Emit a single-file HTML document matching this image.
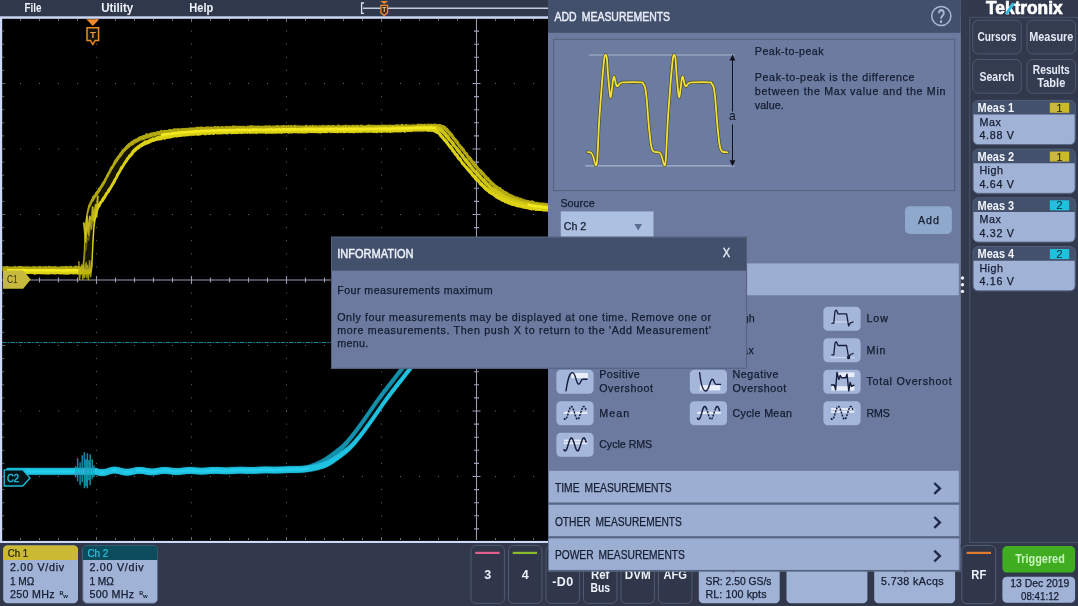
<!DOCTYPE html>
<html lang="en"><head><meta charset="utf-8"><title>Oscilloscope - Add Measurements</title>
<style>html,body{margin:0;padding:0;background:#32384b;overflow:hidden}svg{display:block;will-change:transform}text{font-family:'Liberation Sans', sans-serif;white-space:pre}</style>
</head><body>
<svg width="1078" height="606" viewBox="0 0 1078 606">
<g id="screen">
<rect x="0.00" y="0.00" width="1078.00" height="606.00" fill="#32384b"/>
<rect x="0.00" y="0.00" width="1078.00" height="16.50" fill="#30394c"/>
<g id="graticule">
<rect x="0.00" y="16.30" width="961.00" height="526.70" fill="#cdd7f6"/>
<rect x="2.20" y="18.80" width="958.00" height="522.10" fill="#000"/>
<path d="M96.5 30.60V540M191.5 30.60V540M286.5 30.60V540M381.5 30.60V540M571.5 30.60V540M666.5 30.60V540M761.5 30.60V540M856.5 30.60V540" stroke="#666a70" stroke-width="1" stroke-dasharray="1 12.10" fill="none"/>
<path d="M20.00 83.5H960M20.00 149.0H960M20.00 214.5H960M20.00 345.5H960M20.00 411.0H960M20.00 476.5H960" stroke="#666a70" stroke-width="1" stroke-dasharray="1 18.00" fill="none"/>
<path d="M20.5 19v2M20.5 540v-2M39.5 19v2M39.5 540v-2M58.5 19v2M58.5 540v-2M77.5 19v2M77.5 540v-2M96.5 19v3M96.5 540v-3M115.5 19v2M115.5 540v-2M134.5 19v2M134.5 540v-2M153.5 19v2M153.5 540v-2M172.5 19v2M172.5 540v-2M191.5 19v3M191.5 540v-3M210.5 19v2M210.5 540v-2M229.5 19v2M229.5 540v-2M248.5 19v2M248.5 540v-2M267.5 19v2M267.5 540v-2M286.5 19v3M286.5 540v-3M305.5 19v2M305.5 540v-2M324.5 19v2M324.5 540v-2M343.5 19v2M343.5 540v-2M362.5 19v2M362.5 540v-2M381.5 19v3M381.5 540v-3M400.5 19v2M400.5 540v-2M419.5 19v2M419.5 540v-2M438.5 19v2M438.5 540v-2M457.5 19v2M457.5 540v-2M476.5 19v3M476.5 540v-3M495.5 19v2M495.5 540v-2M514.5 19v2M514.5 540v-2M533.5 19v2M533.5 540v-2M552.5 19v2M552.5 540v-2M571.5 19v3M571.5 540v-3M590.5 19v2M590.5 540v-2M609.5 19v2M609.5 540v-2M628.5 19v2M628.5 540v-2M647.5 19v2M647.5 540v-2M666.5 19v3M666.5 540v-3M685.5 19v2M685.5 540v-2M704.5 19v2M704.5 540v-2M723.5 19v2M723.5 540v-2M742.5 19v2M742.5 540v-2M761.5 19v3M761.5 540v-3M780.5 19v2M780.5 540v-2M799.5 19v2M799.5 540v-2M818.5 19v2M818.5 540v-2M837.5 19v2M837.5 540v-2M856.5 19v3M856.5 540v-3M875.5 19v2M875.5 540v-2M894.5 19v2M894.5 540v-2M913.5 19v2M913.5 540v-2M932.5 19v2M932.5 540v-2M2.2 31.1h2M2.2 44.2h2M2.2 57.3h2M2.2 70.4h2M2.2 83.5h3M2.2 96.6h2M2.2 109.7h2M2.2 122.8h2M2.2 135.9h2M2.2 149.0h3M2.2 162.1h2M2.2 175.2h2M2.2 188.3h2M2.2 201.4h2M2.2 214.5h3M2.2 227.6h2M2.2 240.7h2M2.2 253.8h2M2.2 266.9h2M2.2 280.0h3M2.2 293.1h2M2.2 306.2h2M2.2 319.3h2M2.2 332.4h2M2.2 345.5h3M2.2 358.6h2M2.2 371.7h2M2.2 384.8h2M2.2 397.9h2M2.2 411.0h3M2.2 424.1h2M2.2 437.2h2M2.2 450.3h2M2.2 463.4h2M2.2 476.5h3M2.2 489.6h2M2.2 502.7h2M2.2 515.8h2M2.2 528.9h2" stroke="#6f6f78" stroke-width="1" fill="none"/>
<path d="M476.5 19V540M2 280.0H960M474.0 31.1h5.0M474.0 44.2h5.0M474.0 57.3h5.0M474.0 70.4h5.0M472.5 83.5h8M474.0 96.6h5.0M474.0 109.7h5.0M474.0 122.8h5.0M474.0 135.9h5.0M472.5 149.0h8M474.0 162.1h5.0M474.0 175.2h5.0M474.0 188.3h5.0M474.0 201.4h5.0M472.5 214.5h8M474.0 227.6h5.0M474.0 240.7h5.0M474.0 253.8h5.0M474.0 266.9h5.0M472.5 280.0h8M474.0 293.1h5.0M474.0 306.2h5.0M474.0 319.3h5.0M474.0 332.4h5.0M472.5 345.5h8M474.0 358.6h5.0M474.0 371.7h5.0M474.0 384.8h5.0M474.0 397.9h5.0M472.5 411.0h8M474.0 424.1h5.0M474.0 437.2h5.0M474.0 450.3h5.0M474.0 463.4h5.0M472.5 476.5h8M474.0 489.6h5.0M474.0 502.7h5.0M474.0 515.8h5.0M474.0 528.9h5.0M20.5 277.5v5.0M39.5 277.5v5.0M58.5 277.5v5.0M77.5 277.5v5.0M96.5 276.0v8M115.5 277.5v5.0M134.5 277.5v5.0M153.5 277.5v5.0M172.5 277.5v5.0M191.5 276.0v8M210.5 277.5v5.0M229.5 277.5v5.0M248.5 277.5v5.0M267.5 277.5v5.0M286.5 276.0v8M305.5 277.5v5.0M324.5 277.5v5.0M343.5 277.5v5.0M362.5 277.5v5.0M381.5 276.0v8M400.5 277.5v5.0M419.5 277.5v5.0M438.5 277.5v5.0M457.5 277.5v5.0M476.5 276.0v8M495.5 277.5v5.0M514.5 277.5v5.0M533.5 277.5v5.0M552.5 277.5v5.0M571.5 276.0v8M590.5 277.5v5.0M609.5 277.5v5.0M628.5 277.5v5.0M647.5 277.5v5.0M666.5 276.0v8M685.5 277.5v5.0M704.5 277.5v5.0M723.5 277.5v5.0M742.5 277.5v5.0M761.5 276.0v8M780.5 277.5v5.0M799.5 277.5v5.0M818.5 277.5v5.0M837.5 277.5v5.0M856.5 276.0v8M875.5 277.5v5.0M894.5 277.5v5.0M913.5 277.5v5.0M932.5 277.5v5.0" stroke="#9a9cb4" stroke-width="1.1" fill="none"/>
<path d="M2 342.5H960" stroke="#1f86a1" stroke-width="1.1" stroke-dasharray="4.6 1 1.6 1" fill="none"/>
</g>
<g id="ch1-wave" stroke-linejoin="round">
<path d="M7.0 270.3L8.0 270.3L9.0 270.3L10.0 270.3L11.0 270.3L12.0 270.3L13.0 270.3L14.0 270.3L15.0 270.3L16.0 270.3L17.0 270.3L18.0 270.3L19.0 270.3L20.0 270.3L21.0 270.3L22.0 270.3L23.0 270.3L24.0 270.3L25.0 270.3L26.0 270.3L27.0 270.3L28.0 270.3L29.0 270.3L30.0 270.3L31.0 270.3L32.0 270.3L33.0 270.3L34.0 270.3L35.0 270.3L36.0 270.3L37.0 270.3L38.0 270.3L39.0 270.3L40.0 270.3L41.0 270.3L42.0 270.3L43.0 270.3L44.0 270.3L45.0 270.3L46.0 270.3L47.0 270.3L48.0 270.3L49.0 270.3L50.0 270.3L51.0 270.3L52.0 270.3L53.0 270.3L54.0 270.3L55.0 270.3L56.0 270.3L57.0 270.3L58.0 270.3L59.0 270.3L60.0 270.3L61.0 270.3L62.0 270.3L63.0 270.3L64.0 270.3L65.0 270.3L66.0 270.3L67.0 270.3L68.0 270.3L69.0 270.3L70.0 270.3L71.0 270.3L72.0 270.3L73.0 270.3L74.0 270.3L75.0 270.3L76.0 270.3L77.0 270.3L78.0 270.3L79.0 270.3L80.0 270.3L81.0 270.3L82.0 270.3L83.0 270.3L84.0 270.3L85.0 270.3L86.0 270.3L87.0 268.5L88.0 260.3L89.0 239.6L90.0 224.0L91.0 216.7L92.0 212.0L93.0 208.6L94.0 206.1L95.0 204.0L96.0 202.2L97.0 200.5L98.0 199.1L99.0 197.6L100.0 196.2L101.0 194.7L102.0 193.2L103.0 191.7L104.0 190.2L105.0 188.7L106.0 187.1L107.0 185.5L108.0 183.8L109.0 182.0L110.0 180.2L111.0 178.3L112.0 176.4L113.0 174.5L114.0 172.6L115.0 170.8L116.0 169.1L117.0 167.4L118.0 165.7L119.0 164.1L120.0 162.5L121.0 161.0L122.0 159.6L123.0 158.2L124.0 156.8L125.0 155.5L126.0 154.2L127.0 152.9L128.0 151.7L129.0 150.6L130.0 149.5L131.0 148.5L132.0 147.6L133.0 146.8L134.0 146.0L135.0 145.3L136.0 144.6L137.0 143.9L138.0 143.3L139.0 142.7L140.0 142.2L141.0 141.6L142.0 141.2L143.0 140.7L144.0 140.3L145.0 139.8L146.0 139.4L147.0 139.0L148.0 138.7L149.0 138.3L150.0 138.0L151.0 137.6L152.0 137.3L153.0 137.1L154.0 136.8L155.0 136.5L156.0 136.3L157.0 136.1L158.0 135.9L159.0 135.6L160.0 135.4L161.0 135.2L162.0 135.0L163.0 134.8L164.0 134.7L165.0 134.5L166.0 134.3L167.0 134.2L168.0 134.0L169.0 133.9L170.0 133.8L171.0 133.6L172.0 133.5L173.0 133.4L174.0 133.3L175.0 133.1L176.0 133.0L177.0 132.9L178.0 132.8L179.0 132.7L180.0 132.6L181.0 132.5L182.0 132.4L183.0 132.3L184.0 132.2L185.0 132.1L186.0 132.0L187.0 131.9L188.0 131.9L189.0 131.8L190.0 131.7L191.0 131.6L192.0 131.6L193.0 131.5L194.0 131.5L195.0 131.4L196.0 131.3L197.0 131.3L198.0 131.2L199.0 131.2L200.0 131.1L201.0 131.1L202.0 131.0L203.0 131.0L204.0 130.9L205.0 130.9L206.0 130.8L207.0 130.8L208.0 130.7L209.0 130.7L210.0 130.6L211.0 130.6L212.0 130.5L213.0 130.5L214.0 130.5L215.0 130.4L216.0 130.4L217.0 130.3L218.0 130.3L219.0 130.3L220.0 130.2L221.0 130.2L222.0 130.2L223.0 130.2L224.0 130.1L225.0 130.1L226.0 130.1L227.0 130.1L228.0 130.0L229.0 130.0L230.0 130.0L231.0 130.0L232.0 130.0L233.0 130.0L234.0 129.9L235.0 129.9L236.0 129.9L237.0 129.9L238.0 129.9L239.0 129.9L240.0 129.8L241.0 129.8L242.0 129.8L243.0 129.8L244.0 129.8L245.0 129.8L246.0 129.8L247.0 129.8L248.0 129.7L249.0 129.7L250.0 129.7L251.0 129.7L252.0 129.7L253.0 129.7L254.0 129.7L255.0 129.7L256.0 129.7L257.0 129.7L258.0 129.6L259.0 129.6L260.0 129.6L261.0 129.6L262.0 129.6L263.0 129.6L264.0 129.6L265.0 129.6L266.0 129.6L267.0 129.6L268.0 129.6L269.0 129.5L270.0 129.5L271.0 129.5L272.0 129.5L273.0 129.5L274.0 129.5L275.0 129.5L276.0 129.5L277.0 129.5L278.0 129.5L279.0 129.5L280.0 129.5L281.0 129.5L282.0 129.4L283.0 129.4L284.0 129.4L285.0 129.4L286.0 129.4L287.0 129.4L288.0 129.4L289.0 129.4L290.0 129.4L291.0 129.4L292.0 129.4L293.0 129.4L294.0 129.4L295.0 129.3L296.0 129.3L297.0 129.3L298.0 129.3L299.0 129.3L300.0 129.3L301.0 129.3L302.0 129.3L303.0 129.3L304.0 129.3L305.0 129.3L306.0 129.2L307.0 129.2L308.0 129.2L309.0 129.2L310.0 129.2L311.0 129.2L312.0 129.2L313.0 129.2L314.0 129.2L315.0 129.2L316.0 129.2L317.0 129.2L318.0 129.2L319.0 129.2L320.0 129.2L321.0 129.1L322.0 129.1L323.0 129.1L324.0 129.1L325.0 129.1L326.0 129.1L327.0 129.1L328.0 129.1L329.0 129.1L330.0 129.1L331.0 129.1L332.0 129.1L333.0 129.1L334.0 129.1L335.0 129.1L336.0 129.1L337.0 129.1L338.0 129.0L339.0 129.0L340.0 129.0L341.0 129.0L342.0 129.0L343.0 129.0L344.0 129.0L345.0 129.0L346.0 129.0L347.0 129.0L348.0 129.0L349.0 129.0L350.0 129.0L351.0 129.0L352.0 129.0L353.0 129.0L354.0 129.0L355.0 128.9L356.0 128.9L357.0 128.9L358.0 128.9L359.0 128.9L360.0 128.9L361.0 128.9L362.0 128.9L363.0 128.9L364.0 128.9L365.0 128.9L366.0 128.9L367.0 128.9L368.0 128.9L369.0 128.8L370.0 128.8L371.0 128.8L372.0 128.8L373.0 128.8L374.0 128.8L375.0 128.8L376.0 128.8L377.0 128.8L378.0 128.8L379.0 128.8L380.0 128.7L381.0 128.7L382.0 128.7L383.0 128.7L384.0 128.7L385.0 128.7L386.0 128.7L387.0 128.7L388.0 128.7L389.0 128.6L390.0 128.6L391.0 128.6L392.0 128.6L393.0 128.6L394.0 128.6L395.0 128.6L396.0 128.6L397.0 128.5L398.0 128.5L399.0 128.5L400.0 128.5L401.0 128.5L402.0 128.5L403.0 128.4L404.0 128.4L405.0 128.4L406.0 128.3L407.0 128.3L408.0 128.2L409.0 128.2L410.0 128.1L411.0 128.1L412.0 128.0L413.0 128.0L414.0 127.9L415.0 127.9L416.0 127.8L417.0 127.8L418.0 127.8L419.0 127.7L420.0 127.7L421.0 127.7L422.0 127.6L423.0 127.6L424.0 127.6L425.0 127.6L426.0 127.6L427.0 127.6L428.0 127.6L429.0 127.6L430.0 127.6L431.0 127.7L432.0 127.7L433.0 127.7L434.0 127.8L435.0 127.8L436.0 127.9L437.0 128.1L438.0 128.5L439.0 128.9L440.0 129.3L441.0 129.9L442.0 130.7L443.0 131.8L444.0 132.9L445.0 134.1L446.0 135.2L447.0 136.3L448.0 137.5L449.0 138.7L450.0 139.9L451.0 141.2L452.0 142.5L453.0 143.8L454.0 145.1L455.0 146.4L456.0 147.7L457.0 149.0L458.0 150.3L459.0 151.6L460.0 152.9L461.0 154.2L462.0 155.5L463.0 156.8L464.0 158.1L465.0 159.4L466.0 160.7L467.0 162.0L468.0 163.2L469.0 164.4L470.0 165.6L471.0 166.8L472.0 168.0L473.0 169.1L474.0 170.3L475.0 171.4L476.0 172.5L477.0 173.6L478.0 174.6L479.0 175.7L480.0 176.8L481.0 177.9L482.0 179.0L483.0 180.0L484.0 181.1L485.0 182.2L486.0 183.2L487.0 184.2L488.0 185.2L489.0 186.1L490.0 187.0L491.0 187.9L492.0 188.7L493.0 189.5L494.0 190.2L495.0 190.9L496.0 191.6L497.0 192.3L498.0 193.0L499.0 193.6L500.0 194.2L501.0 194.8L502.0 195.4L503.0 196.0L504.0 196.5L505.0 197.0L506.0 197.5L507.0 198.0L508.0 198.5L509.0 199.0L510.0 199.5L511.0 199.9L512.0 200.3L513.0 200.7L514.0 201.1L515.0 201.4L516.0 201.8L517.0 202.1L518.0 202.4L519.0 202.6L520.0 202.9L521.0 203.2L522.0 203.4L523.0 203.7L524.0 203.9L525.0 204.1L526.0 204.4L527.0 204.6L528.0 204.8L529.0 204.9L530.0 205.1L531.0 205.3L532.0 205.5L533.0 205.6L534.0 205.8L535.0 206.0L536.0 206.1L537.0 206.3L538.0 206.4L539.0 206.6L540.0 206.7L541.0 206.8L542.0 206.9L543.0 207.1L544.0 207.2L545.0 207.3L546.0 207.4L547.0 207.4L548.0 207.5L549.0 207.6L550.0 207.7L551.0 207.7L552.0 207.8" fill="none" stroke="#4a4608" stroke-width="9.5" opacity="0.3"/>
<path d="M3.0 266.9L4.0 267.2L5.0 266.9L6.0 266.9L7.0 266.7L8.0 266.9L9.0 267.3L10.0 267.1L11.0 267.3L12.0 267.1L13.0 267.1L14.0 267.1L15.0 266.5L16.0 267.3L17.0 267.2L18.0 267.1L19.0 266.5L20.0 266.5L21.0 266.7L22.0 266.9L23.0 267.1L24.0 267.0L25.0 267.2L26.0 266.8L27.0 267.1L28.0 267.1L29.0 266.8L30.0 267.5L31.0 267.2L32.0 267.4L33.0 266.8L34.0 266.8L35.0 266.9L36.0 267.0L37.0 267.2L38.0 267.1L39.0 266.9L40.0 266.7L41.0 266.8L42.0 267.4L43.0 266.8L44.0 267.1L45.0 267.1L46.0 266.6L47.0 267.0L48.0 267.4L49.0 266.4L50.0 266.9L51.0 267.0L52.0 266.8L53.0 267.1L54.0 267.0L55.0 266.6L56.0 267.2L57.0 267.2L58.0 267.3L59.0 267.4L60.0 267.1L61.0 267.0L62.0 266.6L63.0 267.2L64.0 266.8L65.0 266.9L66.0 266.6L67.0 266.7L68.0 266.8L69.0 267.4L70.0 266.4L71.0 266.6L72.0 267.1L73.0 267.4L74.0 267.2L75.0 266.4L76.0 266.2L77.0 267.1L78.0 266.8L79.0 266.7L80.0 267.3L81.0 267.3L82.0 267.0L83.0 265.3L84.0 257.1L85.0 236.7L86.0 220.9L87.0 213.6L88.0 208.9L89.0 204.9L90.0 203.2L91.0 201.0L92.0 199.0L93.0 196.6L94.0 195.6L95.0 194.6L96.0 192.4L97.0 191.3L98.0 190.2L99.0 188.0L100.0 187.4L101.0 185.5L102.0 183.8L103.0 182.3L104.0 180.7L105.0 178.8L106.0 177.2L107.0 174.8L108.0 173.0L109.0 171.5L110.0 169.3L111.0 167.3L112.0 166.1L113.0 164.5L114.0 162.3L115.0 160.4L116.0 159.2L117.0 157.7L118.0 156.2L119.0 155.3L120.0 153.2L121.0 152.6L122.0 150.5L123.0 149.4L124.0 148.6L125.0 147.6L126.0 146.4L127.0 145.3L128.0 144.3L129.0 143.5L130.0 142.9L131.0 141.9L132.0 141.3L133.0 140.8L134.0 140.0L135.0 139.6L136.0 139.0L137.0 138.9L138.0 138.0L139.0 137.3L140.0 136.8L141.0 136.5L142.0 136.4L143.0 135.6L144.0 135.5L145.0 135.6L146.0 133.9L147.0 134.0L148.0 134.1L149.0 133.9L150.0 133.6L151.0 133.1L152.0 133.2L153.0 132.9L154.0 132.4L155.0 133.1L156.0 132.2L157.0 131.8L158.0 131.7L159.0 131.5L160.0 131.4L161.0 130.4L162.0 130.9L163.0 131.2L164.0 130.4L165.0 130.6L166.0 130.7L167.0 130.6L168.0 130.6L169.0 129.6L170.0 129.8L171.0 129.7L172.0 129.9L173.0 129.9L174.0 128.7L175.0 129.7L176.0 128.8L177.0 129.4L178.0 128.6L179.0 129.0L180.0 129.2L181.0 128.8L182.0 128.8L183.0 128.9L184.0 128.6L185.0 128.5L186.0 128.9L187.0 128.7L188.0 128.2L189.0 129.0L190.0 127.8L191.0 128.4L192.0 128.0L193.0 128.0L194.0 128.1L195.0 127.9L196.0 128.0L197.0 127.3L198.0 127.3L199.0 127.8L200.0 127.3L201.0 127.3L202.0 127.1L203.0 127.8L204.0 127.6L205.0 127.8L206.0 127.0L207.0 127.3L208.0 126.9L209.0 127.4L210.0 127.6L211.0 126.9L212.0 127.6L213.0 127.3L214.0 127.0L215.0 126.4L216.0 127.4L217.0 126.9L218.0 126.7L219.0 127.0L220.0 127.0L221.0 127.3L222.0 126.5L223.0 127.1L224.0 127.2L225.0 127.2L226.0 126.6L227.0 126.5L228.0 127.0L229.0 126.7L230.0 126.7L231.0 127.0L232.0 126.5L233.0 125.9L234.0 126.5L235.0 126.0L236.0 126.8L237.1 126.6L238.1 126.3L239.2 126.5L240.3 126.7L241.3 126.5L242.4 126.9L243.5 126.4L244.5 126.8L245.6 126.9L246.7 126.9L247.7 126.2L248.8 126.7L249.9 125.8L250.9 126.1L252.0 125.8L253.1 126.7L254.1 126.0L255.2 126.3L256.3 126.3L257.3 126.3L258.4 126.1L259.5 126.4L260.5 126.8L261.6 126.3L262.7 126.4L263.7 126.6L264.8 126.2L265.9 125.9L266.9 126.1L268.0 126.6L269.1 125.7L270.1 126.0L271.2 126.5L272.3 126.4L273.3 126.2L274.4 126.4L275.5 126.2L276.5 125.8L277.6 125.7L278.7 126.0L279.7 126.4L280.8 126.0L281.9 125.9L282.9 125.9L284.0 125.7L285.1 126.1L286.1 125.8L287.2 126.2L288.3 125.4L289.3 126.2L290.4 125.9L291.5 125.5L292.5 126.3L293.6 126.0L294.7 125.4L295.7 125.8L296.8 126.1L297.9 125.9L298.9 126.2L300.0 126.2L301.1 126.2L302.1 126.1L303.2 126.4L304.3 126.2L305.3 126.1L306.4 125.3L307.5 126.2L308.5 126.3L309.6 125.8L310.7 125.8L311.7 126.5L312.8 125.4L313.9 126.0L314.9 126.6L316.0 125.6L317.1 126.1L318.1 126.4L319.2 125.8L320.3 126.0L321.3 126.1L322.4 125.6L323.5 125.8L324.5 125.9L325.6 126.1L326.7 125.8L327.7 125.8L328.8 125.5L329.9 125.7L330.9 126.1L332.0 125.8L333.1 125.5L334.1 125.5L335.2 126.6L336.3 126.1L337.3 126.0L338.4 125.0L339.5 125.9L340.5 125.9L341.6 126.2L342.7 125.9L343.7 125.7L344.8 125.9L345.9 125.1L346.9 126.0L348.0 125.8L349.1 125.5L350.1 126.1L351.2 126.2L352.3 125.3L353.3 125.5L354.4 125.8L355.5 125.7L356.5 125.5L357.6 125.4L358.7 126.3L359.7 125.9L360.8 125.3L361.9 125.2L362.9 126.1L364.0 125.9L365.0 126.2L366.0 125.8L367.0 125.3L368.0 125.7L369.0 124.9L370.0 125.3L371.0 125.5L372.0 125.7L373.0 125.3L374.0 125.5L375.0 125.7L376.0 125.6L377.0 125.7L378.0 125.6L379.0 125.4L380.0 125.7L381.0 125.5L382.0 125.2L383.0 125.3L384.0 125.4L385.0 125.4L386.0 125.5L387.0 125.4L388.0 125.5L389.0 125.4L390.0 125.0L391.0 125.5L392.0 125.7L393.0 125.5L394.0 125.3L395.0 125.5L396.0 125.0L397.0 124.7L398.0 125.3L399.0 125.0L400.0 125.5L401.0 124.9L402.0 124.4L403.0 124.9L404.0 125.7L405.0 125.1L406.0 124.7L407.0 124.9L408.0 125.3L409.0 125.2L410.0 125.1L411.0 125.4L412.0 125.1L413.0 124.9L414.0 125.0L415.0 125.3L416.0 125.0L417.0 125.0L418.0 124.3L419.0 124.5L420.0 124.8L421.0 124.4L422.0 124.8L423.0 124.6L424.0 124.7L425.0 124.3L426.0 125.1L427.0 124.7L428.0 124.2L429.0 124.3L430.0 125.1L431.0 124.2L432.0 124.6L433.0 124.6L434.0 124.4L435.0 124.0L436.0 124.5L437.0 124.5L438.0 124.8L439.0 124.7L440.0 124.6L441.0 125.1L442.0 125.3L443.0 125.6L444.0 126.0L445.0 126.5L446.0 127.7L447.0 128.2L448.0 129.4L449.0 130.8L450.0 131.5L451.0 132.9L452.0 133.6L453.0 135.2L454.0 136.8L455.0 138.1L456.0 139.2L457.0 140.4L458.0 141.4L459.0 143.7L460.0 144.6L461.0 146.0L462.0 146.7L463.0 148.2L464.0 149.0L465.0 151.1L466.0 152.5L467.0 152.9L468.0 154.8L469.0 156.3L470.0 156.9L471.0 158.1L472.0 159.6L473.0 160.9L474.0 161.9L475.0 163.5L476.0 164.8L477.0 166.0L478.0 167.2L479.0 168.5L480.0 169.5L481.0 169.9L482.0 171.2L483.0 172.1L484.0 173.2L485.0 174.6L486.0 175.7L487.0 176.9L488.0 177.3L489.0 178.5L490.0 179.9L491.0 180.8L492.0 181.8L493.0 182.8L494.0 183.5L495.0 184.8L496.0 185.5L497.0 186.1L498.0 186.7L499.0 187.6L500.0 187.5L501.0 188.7L502.0 189.7L503.0 189.9L504.0 191.0L505.0 191.6L506.0 191.7L507.0 192.6L508.0 193.1L509.0 193.9L510.0 194.4L511.0 194.7L512.0 195.0L513.0 195.7L514.0 196.1L515.0 196.8L516.0 197.1L517.0 197.2L518.0 197.4L519.0 198.0L520.0 198.2L521.0 198.4L522.0 199.0L523.0 199.2L524.0 199.7L525.0 200.0L526.0 200.0L527.0 201.1L528.0 200.5L529.0 201.2L530.0 201.1L531.0 201.6L532.0 200.7L533.0 201.4L534.0 201.9L535.0 202.2L536.0 202.9L537.0 202.4L538.0 202.9L539.0 202.9L540.0 203.1L541.0 203.1L542.0 203.1L543.0 203.4L544.0 203.1L545.0 203.9L546.0 203.3L547.0 203.8L548.0 204.5L549.0 203.9L550.0 204.1L551.0 204.5L552.0 204.2L553.0 204.0L554.0 204.4L555.0 204.6L556.0 204.7L556.0 207.8L555.0 208.0L554.0 207.7L553.0 207.6L552.0 207.4L551.0 207.5L550.0 207.7L549.0 207.5L548.0 207.5L547.0 207.2L546.0 207.1L545.0 207.0L544.0 206.4L543.0 206.9L542.0 206.6L541.0 206.5L540.0 205.8L539.0 205.7L538.0 205.7L537.0 205.6L536.0 205.6L535.0 205.4L534.0 205.3L533.0 204.9L532.0 204.9L531.0 204.8L530.0 204.3L529.0 204.7L528.0 204.2L527.0 204.1L526.0 203.4L525.0 203.1L524.0 202.9L523.0 202.7L522.0 202.6L521.0 202.2L520.0 201.8L519.0 201.3L518.0 201.1L517.0 201.1L516.0 200.2L515.0 200.1L514.0 199.7L513.0 198.7L512.0 198.6L511.0 198.5L510.0 197.2L509.0 197.0L508.0 196.6L507.0 195.9L506.0 195.6L505.0 194.9L504.0 194.0L503.0 193.9L502.0 193.2L501.0 192.7L500.0 192.1L499.0 191.1L498.0 190.3L497.0 189.3L496.0 188.9L495.0 187.8L494.0 187.0L493.0 185.9L492.0 185.0L491.0 184.2L490.0 183.6L489.0 181.8L488.0 180.9L487.0 180.2L486.0 179.4L485.0 178.1L484.0 176.5L483.0 175.2L482.0 174.8L481.0 173.5L480.0 172.3L479.0 171.7L478.0 170.6L477.0 169.3L476.0 168.1L475.0 167.0L474.0 166.1L473.0 164.7L472.0 163.4L471.0 162.2L470.0 160.4L469.0 159.8L468.0 158.4L467.0 157.0L466.0 155.1L465.0 154.1L464.0 153.2L463.0 151.2L462.0 150.3L461.0 149.4L460.0 147.5L459.0 146.9L458.0 145.3L457.0 143.8L456.0 142.7L455.0 141.4L454.0 140.1L453.0 139.1L452.0 137.4L451.0 136.3L450.0 135.6L449.0 134.2L448.0 132.8L447.0 132.1L446.0 131.2L445.0 129.9L444.0 129.1L443.0 128.9L442.0 128.5L441.0 128.2L440.0 128.3L439.0 127.7L438.0 128.2L437.0 127.5L436.0 127.6L435.0 127.9L434.0 128.0L433.0 127.9L432.0 127.8L431.0 127.7L430.0 127.7L429.0 127.8L428.0 127.7L427.0 127.8L426.0 127.9L425.0 127.8L424.0 128.0L423.0 128.0L422.0 128.3L421.0 128.0L420.0 127.8L419.0 127.9L418.0 128.0L417.0 128.3L416.0 128.0L415.0 128.3L414.0 128.7L413.0 127.7L412.0 128.1L411.0 128.4L410.0 128.5L409.0 128.5L408.0 128.4L407.0 128.7L406.0 128.6L405.0 128.5L404.0 129.2L403.0 128.7L402.0 128.5L401.0 128.6L400.0 128.6L399.0 128.7L398.0 128.0L397.0 128.6L396.0 129.0L395.0 128.4L394.0 128.7L393.0 129.0L392.0 129.0L391.0 129.1L390.0 128.4L389.0 128.7L388.0 128.7L387.0 129.0L386.0 129.1L385.0 128.2L384.0 129.1L383.0 128.5L382.0 129.0L381.0 128.5L380.0 128.9L379.0 129.2L378.0 128.9L377.0 129.0L376.0 129.1L375.0 129.0L374.0 128.9L373.0 129.3L372.0 129.2L371.0 128.9L370.0 129.6L369.0 128.7L368.0 129.2L367.0 128.9L366.0 129.0L365.0 129.2L364.0 129.1L362.9 129.2L361.9 128.7L360.8 128.7L359.7 129.2L358.7 128.8L357.6 128.8L356.5 128.7L355.5 129.4L354.4 129.2L353.3 129.4L352.3 128.9L351.2 129.1L350.1 128.8L349.1 129.3L348.0 129.5L346.9 128.9L345.9 129.5L344.8 129.4L343.7 129.1L342.7 128.7L341.6 129.5L340.5 129.1L339.5 129.0L338.4 129.3L337.3 129.3L336.3 129.5L335.2 128.9L334.1 129.5L333.1 129.5L332.0 129.5L330.9 129.2L329.9 129.0L328.8 129.5L327.7 129.2L326.7 129.2L325.6 129.6L324.5 129.2L323.5 128.7L322.4 129.2L321.3 128.8L320.3 129.5L319.2 129.3L318.1 129.1L317.1 129.3L316.0 129.5L314.9 129.3L313.9 129.6L312.8 129.3L311.7 129.6L310.7 129.7L309.6 129.7L308.5 129.2L307.5 129.6L306.4 128.9L305.3 129.1L304.3 128.9L303.2 129.6L302.1 129.1L301.1 129.4L300.0 129.4L298.9 129.4L297.9 129.3L296.8 129.5L295.7 129.9L294.7 129.5L293.6 129.6L292.5 129.7L291.5 129.4L290.4 129.2L289.3 129.4L288.3 129.7L287.2 129.1L286.1 129.4L285.1 129.8L284.0 129.7L282.9 129.5L281.9 129.7L280.8 129.6L279.7 129.3L278.7 129.2L277.6 129.4L276.5 129.8L275.5 129.4L274.4 129.4L273.3 129.4L272.3 129.2L271.2 129.6L270.1 129.3L269.1 129.7L268.0 129.1L266.9 129.7L265.9 129.5L264.8 129.2L263.7 129.8L262.7 129.6L261.6 129.2L260.5 129.5L259.5 129.8L258.4 129.6L257.3 129.9L256.3 129.9L255.2 129.9L254.1 129.8L253.1 130.1L252.0 129.9L250.9 129.9L249.9 129.3L248.8 130.0L247.7 130.1L246.7 129.8L245.6 129.7L244.5 130.3L243.5 129.4L242.4 130.0L241.3 130.5L240.3 129.7L239.2 130.1L238.1 130.4L237.1 129.9L236.0 130.1L235.0 130.2L234.0 129.8L233.0 130.0L232.0 130.1L231.0 130.2L230.0 130.0L229.0 130.0L228.0 129.8L227.0 130.0L226.0 130.3L225.0 130.1L224.0 129.9L223.0 130.0L222.0 130.8L221.0 130.5L220.0 130.4L219.0 129.6L218.0 130.4L217.0 130.4L216.0 130.8L215.0 130.5L214.0 130.4L213.0 130.6L212.0 130.0L211.0 130.8L210.0 130.6L209.0 130.4L208.0 131.0L207.0 131.1L206.0 130.4L205.0 130.6L204.0 130.9L203.0 130.9L202.0 130.8L201.0 130.7L200.0 131.5L199.0 131.3L198.0 130.8L197.0 130.8L196.0 131.6L195.0 131.5L194.0 131.8L193.0 131.6L192.0 131.2L191.0 131.6L190.0 131.0L189.0 131.4L188.0 131.7L187.0 131.9L186.0 131.6L185.0 131.8L184.0 132.1L183.0 132.1L182.0 132.3L181.0 132.2L180.0 132.2L179.0 132.6L178.0 132.5L177.0 132.4L176.0 132.5L175.0 132.8L174.0 132.9L173.0 133.0L172.0 133.1L171.0 133.3L170.0 133.3L169.0 133.2L168.0 133.7L167.0 134.0L166.0 134.0L165.0 133.9L164.0 134.2L163.0 134.1L162.0 134.0L161.0 134.6L160.0 134.5L159.0 135.1L158.0 134.9L157.0 134.7L156.0 135.3L155.0 136.1L154.0 135.9L153.0 135.8L152.0 136.2L151.0 136.8L150.0 137.0L149.0 137.2L148.0 137.8L147.0 137.9L146.0 138.1L145.0 138.5L144.0 139.2L143.0 139.4L142.0 139.8L141.0 139.7L140.0 140.3L139.0 141.0L138.0 141.2L137.0 142.0L136.0 142.4L135.0 143.0L134.0 143.3L133.0 144.6L132.0 145.0L131.0 145.3L130.0 146.1L129.0 147.5L128.0 147.6L127.0 148.8L126.0 149.8L125.0 150.7L124.0 151.5L123.0 153.1L122.0 154.4L121.0 155.9L120.0 157.1L119.0 158.3L118.0 159.9L117.0 161.3L116.0 162.7L115.0 164.2L114.0 165.8L113.0 167.7L112.0 168.9L111.0 170.8L110.0 172.7L109.0 174.3L108.0 176.4L107.0 177.9L106.0 180.1L105.0 182.3L104.0 184.0L103.0 185.6L102.0 187.2L101.0 188.4L100.0 190.7L99.0 191.9L98.0 193.5L97.0 194.6L96.0 196.3L95.0 197.3L94.0 199.3L93.0 200.9L92.0 201.8L91.0 204.1L90.0 206.3L89.0 208.3L88.0 211.7L87.0 216.6L86.0 223.9L85.0 239.3L84.0 260.4L83.0 268.7L82.0 270.6L81.0 270.6L80.0 270.8L79.0 270.7L78.0 270.1L77.0 270.3L76.0 270.1L75.0 270.1L74.0 270.4L73.0 270.4L72.0 270.5L71.0 270.0L70.0 270.1L69.0 270.4L68.0 270.4L67.0 270.3L66.0 270.4L65.0 270.2L64.0 270.6L63.0 270.5L62.0 270.4L61.0 270.2L60.0 270.4L59.0 269.7L58.0 270.2L57.0 270.4L56.0 270.0L55.0 270.4L54.0 270.4L53.0 270.1L52.0 270.3L51.0 270.3L50.0 270.5L49.0 270.5L48.0 270.4L47.0 270.2L46.0 270.4L45.0 270.4L44.0 270.6L43.0 270.5L42.0 270.2L41.0 270.1L40.0 270.3L39.0 270.2L38.0 270.1L37.0 270.4L36.0 270.3L35.0 270.4L34.0 270.5L33.0 270.3L32.0 271.0L31.0 270.3L30.0 270.7L29.0 270.4L28.0 270.7L27.0 269.8L26.0 270.2L25.0 270.5L24.0 270.5L23.0 271.0L22.0 270.5L21.0 270.7L20.0 270.6L19.0 270.6L18.0 270.5L17.0 270.4L16.0 270.5L15.0 270.1L14.0 270.7L13.0 270.2L12.0 270.5L11.0 270.9L10.0 270.3L9.0 270.4L8.0 270.7L7.0 270.4L6.0 270.2L5.0 270.5L4.0 270.5L3.0 270.6Z" fill="#b3a912" stroke="#b3a912" stroke-width="1.2"/>
<path d="M301.0 127.8L302.0 127.7L303.0 128.0L304.0 127.8L305.0 127.7L306.0 126.9L307.0 127.8L308.0 127.9L309.0 127.4L310.0 127.4L311.0 128.1L312.0 127.0L313.0 127.6L314.0 128.2L315.0 127.2L316.0 127.7L317.0 128.0L318.0 127.4L319.0 127.6L320.0 127.7L321.0 127.2L322.0 127.4L323.0 127.5L324.0 127.7L325.0 127.4L326.0 127.4L327.0 127.1L328.0 127.3L329.0 127.7L330.0 127.4L331.0 127.1L332.0 127.1L333.0 128.2L334.0 127.7L335.0 127.6L336.0 126.6L337.0 127.5L338.0 127.5L339.0 127.8L340.0 127.5L341.0 127.3L342.0 127.5L343.0 126.7L344.0 127.6L345.0 127.4L346.0 127.1L347.0 127.7L348.0 127.8L349.0 126.9L350.0 127.1L351.0 127.4L352.0 127.3L353.0 127.1L354.0 127.0L355.0 127.9L356.0 127.5L357.0 126.9L358.0 126.8L359.0 127.7L360.0 127.5L361.0 127.8L362.0 127.4L363.0 126.9L364.0 127.3L365.0 126.5L366.0 126.9L367.0 127.1L368.0 127.3L369.0 126.9L370.0 127.1L371.0 127.3L372.0 127.2L373.0 127.3L374.0 127.2L375.0 127.0L376.0 127.3L377.0 127.1L378.0 126.8L379.0 126.9L380.0 127.0L381.0 127.0L382.0 127.1L383.0 127.0L384.0 127.1L385.0 127.0L386.0 126.6L387.0 127.1L388.0 127.3L389.0 127.1L390.0 126.9L391.0 127.1L392.0 126.6L393.0 126.3L394.0 126.9L395.0 126.6L396.0 127.1L397.0 126.5L398.0 126.0L399.0 126.5L400.0 127.3L401.0 126.7L402.0 126.3L403.0 126.5L404.0 126.9L405.0 126.8L406.0 126.7L407.0 127.0L408.0 126.7L409.0 126.5L410.0 126.6L411.0 126.9L412.0 126.6L413.0 126.6L414.0 125.9L415.0 126.1L416.0 126.4L417.0 126.0L418.0 126.4L419.0 126.2L420.0 126.3L421.0 125.9L422.0 126.7L423.0 126.3L424.0 125.8L425.0 125.9L426.0 126.7L427.0 125.8L428.0 126.2L429.0 126.2L430.0 126.0L431.0 125.6L432.0 126.1L433.0 126.1L434.0 126.4L435.0 126.3L436.0 126.2L437.0 126.7L438.0 126.9L439.0 127.2L440.0 127.6L441.0 128.1L442.0 129.3L443.0 129.8L444.0 131.0L445.0 132.4L446.0 133.1L447.0 134.5L448.0 135.2L449.0 136.8L450.0 138.4L451.0 139.7L452.0 140.8L453.0 142.0L454.0 143.0L455.0 145.3L456.0 146.2L457.0 147.6L458.0 148.3L459.0 149.8L460.0 150.6L461.0 152.7L462.0 154.1L463.0 154.5L464.0 156.4L465.0 157.9L466.0 158.5L467.0 159.7L468.0 161.2L469.0 162.5L470.0 163.5L471.0 165.1L472.0 166.4L473.0 167.6L474.0 168.8L475.0 170.1L476.0 171.1L477.0 171.5L478.0 172.8L479.0 173.7L480.0 174.8L481.0 176.2L482.0 177.3L483.0 178.5L484.0 178.9L485.0 180.1L486.0 181.5L487.0 182.4L488.0 183.4L489.0 184.4L490.0 185.1L491.0 186.4L492.0 187.1L493.0 187.7L494.0 188.3L495.0 189.2L496.0 189.1L497.0 190.3L498.0 191.3L499.0 191.5L500.0 192.6L501.0 193.2L502.0 193.3L503.0 194.2L504.0 194.7L505.0 195.5L506.0 196.0L507.0 196.3L508.0 196.6L509.0 197.3L510.0 197.7L511.0 198.4L512.0 198.7L513.0 198.8L514.0 199.0L515.0 199.6L516.0 199.8L517.0 200.0L518.0 200.6L519.0 200.8L520.0 201.3L521.0 201.6L522.0 201.6L523.0 202.7L524.0 202.1L525.0 202.8L526.0 202.7L527.0 203.2L528.0 202.3L529.0 203.0L530.0 203.5L531.0 203.8L532.0 204.5L533.0 204.0L534.0 204.5L535.0 204.5L536.0 204.7L537.0 204.7L538.0 204.7L539.0 205.0L540.0 204.7L541.0 205.5L542.0 204.9L543.0 205.4L544.0 206.1L545.0 205.5L546.0 205.7L547.0 206.1L548.0 205.8L549.0 205.6L550.0 206.0L551.0 206.2L552.0 206.3L552.0 209.7L551.0 209.5L550.0 209.7L549.0 209.4L548.0 209.3L547.0 208.6L546.0 209.3L545.0 209.3L544.0 208.8L543.0 208.6L542.0 209.1L541.0 208.1L540.0 208.5L539.0 208.8L538.0 207.9L537.0 208.1L536.0 208.3L535.0 207.6L534.0 207.6L533.0 207.6L532.0 207.0L531.0 207.0L530.0 206.9L529.0 206.8L528.0 206.5L527.0 206.2L526.0 205.8L525.0 205.8L524.0 205.8L523.0 205.4L522.0 204.9L521.0 204.7L520.0 205.3L519.0 204.6L518.0 204.2L517.0 203.1L516.0 203.6L515.0 203.3L514.0 203.2L513.0 202.5L512.0 202.0L511.0 201.7L510.0 200.7L509.0 200.9L508.0 200.3L507.0 199.6L506.0 199.6L505.0 199.2L504.0 197.9L503.0 197.5L502.0 197.2L501.0 196.6L500.0 195.8L499.0 195.1L498.0 195.2L497.0 194.3L496.0 193.1L495.0 192.3L494.0 192.3L493.0 191.4L492.0 190.8L491.0 189.8L490.0 188.5L489.0 187.9L488.0 186.3L487.0 185.7L486.0 184.9L485.0 184.0L484.0 182.6L483.0 181.7L482.0 180.8L481.0 179.7L480.0 178.7L479.0 177.5L478.0 176.3L477.0 175.5L476.0 174.2L475.0 172.9L474.0 171.8L473.0 170.8L472.0 169.7L471.0 168.6L470.0 167.3L469.0 166.2L468.0 164.9L467.0 163.4L466.0 162.5L465.0 161.4L464.0 159.9L463.0 158.4L462.0 157.3L461.0 155.6L460.0 154.1L459.0 153.3L458.0 151.8L457.0 150.9L456.0 149.2L455.0 147.5L454.0 146.5L453.0 145.9L452.0 144.1L451.0 142.6L450.0 141.4L449.0 140.5L448.0 139.3L447.0 138.1L446.0 137.3L445.0 135.9L444.0 134.6L443.0 133.6L442.0 132.8L441.0 131.8L440.0 131.2L439.0 130.3L438.0 130.1L437.0 130.0L436.0 129.5L435.0 129.8L434.0 129.6L433.0 129.6L432.0 129.3L431.0 130.0L430.0 129.6L429.0 129.3L428.0 129.3L427.0 129.9L426.0 129.2L425.0 129.5L424.0 129.5L423.0 129.3L422.0 129.1L421.0 129.4L420.0 129.5L419.0 129.7L418.0 129.6L417.0 129.5L416.0 129.7L415.0 129.7L414.0 129.7L413.0 129.7L412.0 129.7L411.0 129.9L410.0 129.6L409.0 129.7L408.0 129.9L407.0 129.6L406.0 129.9L405.0 129.6L404.0 129.9L403.0 130.3L402.0 130.3L401.0 130.2L400.0 130.1L399.0 129.9L398.0 130.7L397.0 130.4L396.0 130.5L395.0 130.1L394.0 130.2L393.0 129.9L392.0 130.5L391.0 130.5L390.0 129.9L389.0 130.3L388.0 130.5L387.0 129.9L386.0 129.9L385.0 130.1L384.0 130.3L383.0 130.1L382.0 130.4L381.0 130.5L380.0 130.6L379.0 130.6L378.0 130.8L377.0 130.8L376.0 130.2L375.0 130.4L374.0 130.2L373.0 130.3L372.0 130.5L371.0 130.5L370.0 130.7L369.0 130.2L368.0 130.3L367.0 130.6L366.0 130.5L365.0 130.5L364.0 130.6L363.0 130.4L362.0 130.8L361.0 130.7L360.0 130.6L359.0 130.5L358.0 130.6L357.0 130.0L356.0 130.4L355.0 130.7L354.0 130.3L353.0 130.7L352.0 130.7L351.0 130.3L350.0 130.6L349.0 130.6L348.0 130.8L347.0 130.8L346.0 130.7L345.0 130.5L344.0 130.7L343.0 130.7L342.0 130.9L341.0 130.8L340.0 130.6L339.0 130.4L338.0 130.7L337.0 130.6L336.0 130.5L335.0 130.7L334.0 130.6L333.0 130.8L332.0 130.9L331.0 130.7L330.0 131.3L329.0 130.7L328.0 131.1L327.0 130.8L326.0 131.1L325.0 130.2L324.0 130.6L323.0 130.9L322.0 131.0L321.0 131.4L320.0 130.9L319.0 131.2L318.0 131.0L317.0 131.1L316.0 131.0L315.0 130.8L314.0 131.0L313.0 130.6L312.0 131.2L311.0 130.7L310.0 131.0L309.0 131.4L308.0 130.9L307.0 130.9L306.0 131.2L305.0 131.0L304.0 130.8L303.0 131.0L302.0 131.1L301.0 131.2Z" fill="#cfc514" stroke="#cfc514" stroke-width="1.2"/>
<path d="M11.0 270.3L12.0 270.0L13.0 270.3L14.0 270.3L15.0 270.5L16.0 270.3L17.0 269.9L18.0 270.1L19.0 269.9L20.0 270.1L21.0 270.1L22.0 270.1L23.0 270.7L24.0 269.9L25.0 270.0L26.0 270.1L27.0 270.7L28.0 270.7L29.0 270.5L30.0 270.3L31.0 270.1L32.0 270.2L33.0 270.0L34.0 270.4L35.0 270.1L36.0 270.1L37.0 270.4L38.0 269.7L39.0 270.0L40.0 269.8L41.0 270.4L42.0 270.4L43.0 270.3L44.0 270.2L45.0 270.0L46.0 270.1L47.0 270.3L48.0 270.5L49.0 270.4L50.0 269.8L51.0 270.4L52.0 270.1L53.0 270.1L54.0 270.6L55.0 270.2L56.0 269.8L57.0 270.8L58.0 270.3L59.0 270.2L60.0 270.4L61.0 270.1L62.0 270.2L63.0 270.6L64.0 270.0L65.0 270.0L66.0 269.9L67.0 269.8L68.0 270.1L69.0 270.2L70.0 270.6L71.0 270.0L72.0 270.4L73.0 270.3L74.0 270.6L75.0 270.5L76.0 270.4L77.0 269.8L78.0 270.8L79.0 270.6L80.0 270.1L81.0 269.8L82.0 270.0L83.0 270.8L84.0 271.0L85.0 270.1L86.0 270.4L87.0 270.5L88.0 269.9L89.0 269.9L90.0 270.2L91.0 268.4L92.0 260.1L93.0 239.0L94.0 223.7L95.0 216.5L96.0 211.7L97.0 209.0L98.0 205.6L99.0 203.6L100.0 201.9L101.0 201.0L102.0 199.1L103.0 197.3L104.0 196.6L105.0 194.6L106.0 192.8L107.0 192.0L108.0 189.6L109.0 188.4L110.0 187.1L111.0 185.3L112.0 183.5L113.0 181.9L114.0 179.7L115.0 178.4L116.0 176.4L117.0 174.1L118.0 172.5L119.0 171.0L120.0 168.7L121.0 166.9L122.0 165.8L123.0 164.4L124.0 162.5L125.0 161.0L126.0 159.6L127.0 157.7L128.0 157.1L129.0 155.0L130.0 154.5L131.0 153.1L132.0 151.4L133.0 150.1L134.0 149.1L135.0 148.3L136.0 147.5L137.0 146.6L138.0 145.7L139.0 145.2L140.0 144.4L141.0 143.6L142.0 143.2L143.0 142.4L144.0 141.9L145.0 140.9L146.0 141.0L147.0 140.7L148.0 140.3L149.0 139.7L150.0 139.0L151.0 139.0L152.0 138.4L153.0 137.7L154.0 138.6L155.0 137.9L156.0 137.2L157.0 136.8L158.0 136.6L159.0 136.6L160.0 136.0L161.0 135.9L162.0 135.9L163.0 134.8L164.0 135.2L165.0 135.3L166.0 135.0L167.0 134.8L168.0 134.6L169.0 135.2L170.0 134.4L171.0 133.8L172.0 134.3L173.0 133.8L174.0 133.4L175.0 133.3L176.0 133.0L177.0 133.8L178.0 133.3L179.0 133.1L180.0 132.7L181.0 132.5L182.0 133.5L183.0 132.3L184.0 132.9L185.0 132.2L186.0 132.7L187.0 132.1L188.0 131.7L189.0 132.0L190.0 131.9L191.0 131.6L192.0 131.7L193.0 131.7L194.0 131.1L195.0 131.2L196.0 131.6L197.0 130.6L198.0 131.7L199.0 131.0L200.0 131.3L201.0 131.1L202.0 130.9L203.0 131.0L204.0 130.8L205.0 131.4L206.0 131.4L207.0 130.7L208.0 131.1L209.0 131.1L210.0 131.2L211.0 130.3L212.0 130.4L213.0 130.1L214.0 130.8L215.0 130.5L216.0 130.8L217.0 130.2L218.0 129.9L219.0 130.6L220.0 129.8L221.0 130.0L222.0 130.3L223.0 130.8L224.0 129.7L225.0 130.1L226.0 130.3L227.0 129.9L228.0 129.9L229.0 129.6L230.0 130.3L231.0 129.6L232.0 129.5L233.0 129.5L234.0 130.0L235.0 130.1L236.0 129.6L237.0 129.8L238.0 129.8L239.0 129.4L240.0 129.9L241.0 130.5L242.0 129.9L243.0 130.3L244.0 129.5L244.9 129.6L245.9 129.9L246.8 129.7L247.7 129.4L248.7 129.7L249.6 129.3L250.5 129.7L251.5 129.3L252.4 129.2L253.3 129.1L254.3 129.8L255.2 129.3L256.1 130.2L257.1 129.9L258.0 130.2L258.9 129.2L259.9 129.9L260.8 129.5L261.7 129.6L262.7 129.5L263.6 129.7L264.5 129.4L265.5 129.0L266.4 129.5L267.3 129.3L268.3 129.2L269.2 129.5L270.1 129.8L271.1 129.6L272.0 129.1L272.9 129.9L273.9 129.6L274.8 129.1L275.7 129.2L276.7 129.4L277.6 129.1L278.5 129.3L279.5 129.7L280.4 129.8L281.3 129.6L282.3 129.1L283.2 129.5L284.1 129.6L285.1 129.6L286.0 129.8L286.9 129.3L287.9 129.7L288.8 129.2L289.7 130.0L290.7 129.2L291.6 129.5L292.5 129.9L293.5 129.0L294.4 129.3L295.3 129.9L296.3 129.5L297.2 129.1L298.1 129.4L299.1 129.0L300.0 129.0L300.9 129.0L301.9 129.1L302.8 128.8L303.7 129.0L304.7 129.0L305.6 129.8L306.5 128.9L307.5 128.7L308.4 129.2L309.3 129.3L310.3 128.5L311.2 129.6L312.1 129.0L313.1 128.4L314.0 129.4L314.9 128.9L315.9 128.5L316.8 129.1L317.7 128.9L318.7 128.8L319.6 129.3L320.5 129.1L321.5 128.9L322.4 128.8L323.3 129.0L324.3 129.1L325.2 129.3L326.1 129.1L327.1 128.7L328.0 129.0L328.9 129.2L329.9 129.2L330.8 128.2L331.7 128.6L332.7 128.8L333.6 129.7L334.5 128.8L335.5 128.8L336.4 128.4L337.3 128.8L338.3 128.9L339.2 128.8L340.1 129.5L341.1 128.6L342.0 128.8L342.9 129.1L343.9 128.5L344.8 128.3L345.7 129.3L346.7 129.1L347.6 128.8L348.5 128.8L349.5 129.0L350.4 129.1L351.3 128.2L352.3 128.5L353.2 129.2L354.1 129.2L355.1 128.3L356.0 128.5L357.0 128.3L358.0 128.6L359.0 129.1L360.0 128.7L361.0 129.4L362.0 129.0L363.0 128.8L364.0 128.6L365.0 129.0L366.0 128.8L367.0 128.6L368.0 128.6L369.0 128.5L370.0 128.6L371.0 128.8L372.0 128.4L373.0 128.7L374.0 128.9L375.0 128.8L376.0 128.6L377.0 128.7L378.0 128.6L379.0 128.6L380.0 128.6L381.0 128.6L382.0 129.0L383.0 128.4L384.0 128.2L385.0 128.4L386.0 128.6L387.0 128.4L388.0 128.8L389.0 129.1L390.0 128.5L391.0 128.8L392.0 128.2L393.0 128.8L394.0 129.2L395.0 128.7L396.0 127.9L397.0 128.5L398.0 128.8L399.0 128.6L400.0 128.1L401.0 128.1L402.0 128.2L403.0 127.7L404.0 127.9L405.0 128.1L406.0 127.9L407.0 127.5L408.0 127.6L409.0 127.6L410.0 128.2L411.0 127.8L412.0 127.5L413.0 127.8L414.0 127.3L415.0 127.4L416.0 127.3L417.0 127.6L418.0 126.8L419.0 127.1L420.0 127.6L421.0 127.5L422.0 126.7L423.0 127.6L424.0 127.3L425.0 127.2L426.0 127.5L427.0 127.9L428.0 127.5L429.0 127.5L430.0 127.3L431.0 127.5L432.0 127.8L433.0 127.8L434.0 128.2L435.0 128.7L436.0 129.2L437.0 129.9L438.0 130.4L439.0 132.0L440.0 133.0L441.0 134.0L442.0 135.5L443.0 136.3L444.0 138.0L445.0 138.8L446.0 139.7L447.0 140.9L448.0 142.4L449.0 143.8L450.0 145.4L451.0 145.8L452.0 147.5L453.0 148.6L454.0 150.4L455.0 151.5L456.0 153.3L457.0 153.8L458.0 155.1L459.0 157.3L460.0 158.0L461.0 159.1L462.0 161.1L463.0 162.4L464.0 163.4L465.0 164.5L466.0 166.0L467.0 166.7L468.0 167.8L469.0 168.8L470.0 170.0L471.0 170.8L472.0 172.0L473.0 173.9L474.0 174.7L475.0 175.9L476.0 177.0L477.0 177.8L478.0 178.9L479.0 179.8L480.0 181.5L481.0 182.4L482.0 183.1L483.0 184.1L484.0 185.1L485.0 186.0L486.0 187.1L487.0 187.6L488.0 188.5L489.0 189.4L490.0 190.3L491.0 190.9L492.0 192.4L493.0 192.5L494.0 192.9L495.0 194.0L496.0 194.1L497.0 194.7L498.0 195.7L499.0 195.9L500.0 196.5L501.0 196.8L502.0 197.3L503.0 197.9L504.0 198.7L505.0 198.9L506.0 199.4L507.0 199.6L508.0 200.1L509.0 200.8L510.0 201.4L511.0 201.4L512.0 201.9L513.0 202.3L514.0 202.3L515.0 202.7L516.0 202.8L517.0 202.9L518.0 203.5L519.0 202.9L520.0 203.9L521.0 203.7L522.0 204.2L523.0 204.1L524.0 205.4L525.0 205.1L526.0 205.0L527.0 205.0L528.0 204.7L529.0 205.4L530.0 205.3L531.0 205.6L532.0 205.7L533.0 206.0L534.0 206.4L535.0 206.3L536.0 206.9L537.0 206.4L538.0 207.2L539.0 206.9L540.0 206.4L541.0 207.2L542.0 207.2L543.0 207.0L544.0 207.4L545.0 207.7L546.0 207.5L547.0 207.5L548.0 207.5L548.0 211.2L547.0 210.9L546.0 211.0L545.0 211.0L544.0 211.0L543.0 210.8L542.0 210.4L541.0 210.5L540.0 210.2L539.0 210.3L538.0 210.2L537.0 210.1L536.0 210.4L535.0 209.7L534.0 209.6L533.0 209.5L532.0 209.8L531.0 209.7L530.0 209.3L529.0 209.1L528.0 208.7L527.0 208.6L526.0 208.3L525.0 208.4L524.0 208.0L523.0 207.8L522.0 207.8L521.0 207.0L520.0 207.1L519.0 206.7L518.0 206.9L517.0 206.7L516.0 206.3L515.0 206.0L514.0 205.5L513.0 205.3L512.0 205.2L511.0 205.0L510.0 204.5L509.0 203.7L508.0 203.8L507.0 203.1L506.0 202.7L505.0 202.7L504.0 201.8L503.0 201.0L502.0 201.3L501.0 200.4L500.0 199.8L499.0 199.5L498.0 198.6L497.0 198.1L496.0 197.9L495.0 196.7L494.0 196.1L493.0 195.4L492.0 194.6L491.0 194.2L490.0 193.5L489.0 193.1L488.0 191.8L487.0 191.3L486.0 190.4L485.0 189.7L484.0 188.7L483.0 187.6L482.0 186.2L481.0 185.9L480.0 184.8L479.0 183.3L478.0 181.9L477.0 181.1L476.0 180.6L475.0 179.6L474.0 177.9L473.0 177.0L472.0 176.1L471.0 174.5L470.0 173.3L469.0 172.4L468.0 171.2L467.0 170.0L466.0 168.6L465.0 167.6L464.0 166.4L463.0 165.1L462.0 164.4L461.0 162.4L460.0 161.2L459.0 160.0L458.0 159.3L457.0 157.6L456.0 156.0L455.0 155.3L454.0 153.6L453.0 152.1L452.0 151.3L451.0 149.3L450.0 148.3L449.0 147.1L448.0 145.7L447.0 144.3L446.0 143.2L445.0 141.7L444.0 140.9L443.0 139.7L442.0 138.2L441.0 137.4L440.0 136.4L439.0 134.8L438.0 133.7L437.0 133.3L436.0 132.9L435.0 132.2L434.0 131.8L433.0 131.5L432.0 130.9L431.0 131.3L430.0 130.8L429.0 131.3L428.0 131.2L427.0 130.8L426.0 130.7L425.0 130.7L424.0 130.8L423.0 130.9L422.0 130.9L421.0 130.8L420.0 130.9L419.0 130.8L418.0 130.8L417.0 131.0L416.0 130.8L415.0 130.9L414.0 130.6L413.0 131.0L412.0 131.2L411.0 131.3L410.0 131.2L409.0 131.1L408.0 131.4L407.0 131.3L406.0 131.0L405.0 132.1L404.0 131.8L403.0 131.5L402.0 131.5L401.0 131.6L400.0 131.8L399.0 131.6L398.0 131.7L397.0 131.9L396.0 131.2L395.0 131.7L394.0 132.0L393.0 131.9L392.0 131.9L391.0 131.9L390.0 132.5L389.0 132.0L388.0 131.7L387.0 132.2L386.0 132.0L385.0 131.7L384.0 131.8L383.0 131.6L382.0 132.4L381.0 132.1L380.0 132.1L379.0 131.9L378.0 131.8L377.0 132.7L376.0 131.8L375.0 132.4L374.0 131.9L373.0 132.4L372.0 132.0L371.0 131.8L370.0 132.1L369.0 132.1L368.0 131.9L367.0 132.1L366.0 132.2L365.0 131.8L364.0 131.9L363.0 132.2L362.0 131.5L361.0 132.5L360.0 132.0L359.0 132.3L358.0 132.2L357.0 132.0L356.0 132.2L355.1 132.1L354.1 132.6L353.2 132.6L352.3 132.1L351.3 132.5L350.4 132.5L349.5 132.6L348.5 132.0L347.6 132.1L346.7 131.9L345.7 132.5L344.8 132.3L343.9 132.6L342.9 132.1L342.0 131.9L341.1 132.5L340.1 131.9L339.2 132.1L338.3 132.4L337.3 132.8L336.4 132.0L335.5 132.4L334.5 132.5L333.6 132.3L332.7 132.3L331.7 132.0L330.8 132.6L329.9 132.1L328.9 132.0L328.0 132.0L327.1 132.4L326.1 132.6L325.2 132.2L324.3 132.4L323.3 132.4L322.4 132.1L321.5 132.5L320.5 133.0L319.6 132.5L318.7 132.9L317.7 132.3L316.8 132.4L315.9 132.6L314.9 132.5L314.0 132.3L313.1 132.5L312.1 132.2L311.2 132.5L310.3 132.3L309.3 132.2L308.4 132.1L307.5 132.7L306.5 132.3L305.6 133.0L304.7 132.8L303.7 133.0L302.8 132.3L301.9 132.9L300.9 132.6L300.0 132.6L299.1 132.6L298.1 132.8L297.2 132.6L296.3 132.2L295.3 132.6L294.4 132.5L293.5 132.4L292.5 132.7L291.6 133.0L290.7 132.8L289.7 132.4L288.8 133.1L287.9 132.9L286.9 132.5L286.0 132.5L285.1 132.7L284.1 132.5L283.2 132.7L282.3 133.0L281.3 133.1L280.4 132.9L279.5 132.6L278.5 132.9L277.6 133.0L276.7 133.0L275.7 133.2L274.8 132.8L273.9 133.1L272.9 132.7L272.0 133.4L271.1 132.8L270.1 133.0L269.2 133.3L268.3 132.7L267.3 132.9L266.4 133.4L265.5 133.1L264.5 132.8L263.6 133.0L262.7 132.7L261.7 132.8L260.8 132.8L259.9 132.9L258.9 132.6L258.0 132.8L257.1 132.9L256.1 133.5L255.2 132.8L254.3 132.7L253.3 133.1L252.4 133.1L251.5 132.6L250.5 133.5L249.6 133.0L248.7 132.5L247.7 133.3L246.8 132.9L245.9 132.7L244.9 133.2L244.0 133.0L243.0 132.9L242.0 133.4L241.0 133.2L240.0 133.1L239.0 133.0L238.0 133.2L237.0 133.3L236.0 133.5L235.0 133.4L234.0 133.1L233.0 133.3L232.0 133.5L231.0 133.6L230.0 132.7L229.0 133.1L228.0 133.3L227.0 134.1L226.0 133.3L225.0 133.4L224.0 133.1L223.0 133.5L222.0 133.6L221.0 133.5L220.0 134.1L219.0 133.5L218.0 133.7L217.0 134.0L216.0 133.5L215.0 133.4L214.0 134.3L213.0 134.1L212.0 133.9L211.0 134.0L210.0 134.2L209.0 134.4L208.0 133.7L207.0 134.0L206.0 134.6L205.0 134.7L204.0 134.0L203.0 134.2L202.0 134.1L201.0 134.4L200.0 134.9L199.0 134.6L198.0 135.3L197.0 135.0L196.0 134.9L195.0 134.8L194.0 135.2L193.0 135.1L192.0 135.0L191.0 135.1L190.0 135.2L189.0 135.3L188.0 135.6L187.0 135.4L186.0 135.7L185.0 136.0L184.0 136.0L183.0 136.0L182.0 136.1L181.0 136.2L180.0 136.3L179.0 136.4L178.0 136.6L177.0 137.0L176.0 136.7L175.0 136.7L174.0 137.0L173.0 137.2L172.0 137.2L171.0 137.7L170.0 138.1L169.0 137.8L168.0 138.2L167.0 138.0L166.0 138.6L165.0 139.2L164.0 139.0L163.0 138.6L162.0 139.2L161.0 139.7L160.0 139.8L159.0 139.7L158.0 140.0L157.0 140.3L156.0 140.3L155.0 140.8L154.0 141.3L153.0 141.5L152.0 141.6L151.0 142.1L150.0 142.5L149.0 143.4L148.0 143.6L147.0 143.8L146.0 144.5L145.0 144.7L144.0 145.3L143.0 145.8L142.0 146.6L141.0 146.6L140.0 147.6L139.0 148.6L138.0 149.3L137.0 149.5L136.0 151.0L135.0 151.6L134.0 152.6L133.0 153.9L132.0 155.3L131.0 156.2L130.0 157.4L129.0 158.5L128.0 160.0L127.0 161.5L126.0 162.7L125.0 164.2L124.0 165.8L123.0 167.4L122.0 169.1L121.0 170.5L120.0 172.6L119.0 174.3L118.0 175.9L117.0 178.2L116.0 179.8L115.0 182.1L114.0 183.6L113.0 185.2L112.0 187.0L111.0 188.8L110.0 190.5L109.0 192.3L108.0 193.0L107.0 194.8L106.0 196.2L105.0 198.2L104.0 199.6L103.0 201.4L102.0 202.2L101.0 203.6L100.0 205.9L99.0 207.3L98.0 209.2L97.0 212.4L96.0 215.7L95.0 220.3L94.0 227.5L93.0 243.2L92.0 263.6L91.0 271.8L90.0 273.4L89.0 273.4L88.0 273.2L87.0 273.3L86.0 273.9L85.0 273.7L84.0 273.9L83.0 273.9L82.0 273.6L81.0 273.6L80.0 273.5L79.0 274.0L78.0 273.9L77.0 273.6L76.0 273.6L75.0 273.7L74.0 273.6L73.0 273.8L72.0 273.4L71.0 273.5L70.0 273.6L69.0 273.8L68.0 273.6L67.0 274.3L66.0 273.8L65.0 273.6L64.0 274.0L63.0 273.6L62.0 273.6L61.0 273.9L60.0 273.7L59.0 273.7L58.0 273.5L57.0 273.5L56.0 273.6L55.0 273.8L54.0 273.6L53.0 273.6L52.0 273.4L51.0 273.5L50.0 273.8L49.0 273.9L48.0 273.7L47.0 273.8L46.0 273.9L45.0 273.6L44.0 273.7L43.0 273.6L42.0 273.5L41.0 273.7L40.0 273.0L39.0 273.7L38.0 273.3L37.0 273.6L36.0 273.3L35.0 274.2L34.0 273.8L33.0 273.5L32.0 273.5L31.0 273.0L30.0 273.5L29.0 273.3L28.0 273.4L27.0 273.4L26.0 273.5L25.0 273.6L24.0 273.5L23.0 273.9L22.0 273.3L21.0 273.8L20.0 273.5L19.0 273.1L18.0 273.7L17.0 273.6L16.0 273.3L15.0 273.6L14.0 273.8L13.0 273.5L12.0 273.5L11.0 273.4Z" fill="#ddd316" stroke="#ddd316" stroke-width="1.2"/>
<path d="M7.0 270.3L8.0 270.4L9.0 270.3L10.0 270.3L11.0 270.2L12.0 270.3L13.0 270.5L14.0 270.4L15.0 270.5L16.0 270.3L17.0 270.4L18.0 270.3L19.0 270.1L20.0 270.4L21.0 270.4L22.0 270.4L23.0 270.0L24.0 270.0L25.0 270.2L26.0 270.2L27.0 270.3L28.0 270.3L29.0 270.4L30.0 270.2L31.0 270.3L32.0 270.4L33.0 270.2L34.0 270.6L35.0 270.4L36.0 270.5L37.0 270.2L38.0 270.2L39.0 270.2L40.0 270.3L41.0 270.4L42.0 270.3L43.0 270.2L44.0 270.2L45.0 270.2L46.0 270.5L47.0 270.2L48.0 270.3L49.0 270.4L50.0 270.1L51.0 270.3L52.0 270.5L53.0 270.0L54.0 270.3L55.0 270.3L56.0 270.2L57.0 270.4L58.0 270.3L59.0 270.1L60.0 270.4L61.0 270.4L62.0 270.4L63.0 270.5L64.0 270.4L65.0 270.3L66.0 270.1L67.0 270.4L68.0 270.2L69.0 270.2L70.0 270.1L71.0 270.2L72.0 270.2L73.0 270.5L74.0 270.0L75.0 270.1L76.0 270.3L77.0 270.5L78.0 270.4L79.0 270.0L80.0 269.9L81.0 270.4L82.0 270.2L83.0 270.1L84.0 270.4L85.0 270.5M161.0 135.1L162.0 135.0L163.0 134.8L164.0 134.7L165.0 134.1L166.0 134.3L167.0 134.3L168.0 133.9L169.0 133.9L170.0 133.9L171.0 133.8L172.0 133.7L173.0 133.1L174.0 133.2L175.0 133.1L176.0 133.1L177.0 133.1L178.0 132.4L179.0 132.8L180.0 132.4L181.0 132.6L182.0 132.1L183.0 132.3L184.0 132.4L185.0 132.1L186.0 132.0L187.0 132.1L188.0 131.9L189.0 131.8L190.0 131.9L191.0 131.8L192.0 131.5L193.0 131.9L194.0 131.3L195.0 131.5L196.0 131.3L197.0 131.3L198.0 131.3L199.0 131.2L200.0 131.2L201.0 130.8L202.0 130.8L203.0 131.1L204.0 130.8L205.0 130.7L206.0 130.6L207.0 131.0L208.0 130.8L209.0 130.9L210.0 130.5L211.0 130.6L212.0 130.4L213.0 130.6L214.0 130.7L215.0 130.3L216.0 130.6L217.0 130.5L218.0 130.3L219.0 130.0L220.0 130.5L221.0 130.2L222.0 130.1L223.0 130.2L224.0 130.2L225.0 130.3L226.0 129.9L227.0 130.2L228.0 130.3L229.0 130.2L230.0 130.0L231.0 129.9L232.0 130.1L233.0 130.0L234.0 130.0L235.0 130.1L236.0 129.9L237.0 129.5L238.0 129.8L239.0 129.6L240.0 130.0L241.0 129.9L242.0 129.7L243.0 129.8L244.0 129.9L245.0 129.8L246.0 130.0L247.0 129.7L248.0 129.9L249.0 130.0L250.0 130.0L251.0 129.6L252.0 129.8L253.0 129.4L254.0 129.5L255.0 129.4L256.0 129.8L257.0 129.5L258.0 129.6L259.0 129.6L260.0 129.6L261.0 129.5L262.0 129.6L263.0 129.9L264.0 129.6L265.0 129.7L266.0 129.7L267.0 129.5L268.0 129.4L269.0 129.5L270.0 129.7L271.0 129.3L272.0 129.4L273.0 129.7L274.0 129.6L275.0 129.5L276.0 129.6L277.0 129.5L278.0 129.3L279.0 129.2L280.0 129.4L281.0 129.6L282.0 129.4L283.0 129.3L284.0 129.3L285.0 129.2L286.0 129.4L287.0 129.2L288.0 129.5L289.0 129.0L290.0 129.4L291.0 129.3L292.0 129.1L293.0 129.5L294.0 129.3L295.0 129.0L296.0 129.2L297.0 129.4L298.0 129.2L299.0 129.4L300.0 129.4L301.0 129.4L302.0 129.3L303.0 129.5L304.0 129.4L305.0 129.3L306.0 128.9L307.0 129.4L308.0 129.4L309.0 129.2L310.0 129.1L311.0 129.5L312.0 128.9L313.0 129.3L314.0 129.6L315.0 129.0L316.0 129.3L317.0 129.5L318.0 129.1L319.0 129.2L320.0 129.3L321.0 129.0L322.0 129.1L323.0 129.2L324.0 129.2L325.0 129.1L326.0 129.1L327.0 129.0L328.0 129.0L329.0 129.2L330.0 129.1L331.0 129.0L332.0 129.0L333.0 129.5L334.0 129.2L335.0 129.2L336.0 128.7L337.0 129.1L338.0 129.1L339.0 129.3L340.0 129.1L341.0 129.0L342.0 129.1L343.0 128.7L344.0 129.2L345.0 129.1L346.0 128.9L347.0 129.2L348.0 129.3L349.0 128.8L350.0 128.9L351.0 129.0L352.0 129.0L353.0 128.9L354.0 128.8L355.0 129.3L356.0 129.1L357.0 128.8L358.0 128.7L359.0 129.2L360.0 129.1L361.0 129.2L362.0 129.0L363.0 128.8L364.0 128.9L365.0 128.6L366.0 128.8L367.0 128.9L368.0 128.9L369.0 128.7L370.0 128.8L371.0 128.9L372.0 128.9L373.0 128.9L374.0 128.8L375.0 128.7L376.0 128.9L377.0 128.8L378.0 128.6L379.0 128.7L380.0 128.7L381.0 128.7L382.0 128.7L383.0 128.7L384.0 128.7L385.0 128.7L386.0 128.5L387.0 128.7L388.0 128.8L389.0 128.7L390.0 128.6L391.0 128.7L392.0 128.5L393.0 128.3L394.0 128.6L395.0 128.4L396.0 128.7L397.0 128.4L398.0 128.1L399.0 128.4L400.0 128.7L401.0 128.4L402.0 128.3L403.0 128.3L404.0 128.5L405.0 128.4L406.0 128.3L407.0 128.5L408.0 128.3L409.0 128.2L410.0 128.2L411.0 128.3L412.0 128.2L413.0 128.1L414.0 127.8L415.0 127.9L416.0 127.9L417.0 127.7L418.0 127.9L419.0 127.8L420.0 127.8L421.0 127.6L422.0 128.0L423.0 127.8L424.0 127.6L425.0 127.6L426.0 128.0L427.0 127.6L428.0 127.7L429.0 127.8L430.0 127.6L431.0 127.5L432.0 127.7L433.0 127.8L434.0 127.9L435.0 127.9L436.0 127.9M528.0 204.4L529.0 204.8L530.0 205.2L531.0 205.4L532.0 205.8L533.0 205.7L534.0 206.0L535.0 206.1L536.0 206.3L537.0 206.4L538.0 206.4L539.0 206.6L540.0 206.5L541.0 207.0L542.0 206.8L543.0 207.1L544.0 207.5L545.0 207.2L546.0 207.4L547.0 207.6L548.0 207.5L549.0 207.5L550.0 207.7L551.0 207.8L552.0 207.9" fill="none" stroke="#f3eb20" stroke-width="2.4"/>
<path d="M78.8 261.3L79.5 279.3L81.6 264.9L82.8 279.1L83.8 264.1L84.3 277.5L86.1 262.6L86.4 277.6L87.4 265.3L88.3 279.7L89.6 260.8L90.6 276.8L92.0 264.6" fill="none" stroke="#b8ae18" stroke-width="1.5" opacity="0.85"/>
<path d="M83.8 222.3L85.9 242.1L87.0 216.9L88.7 234.9L89.9 216.5L91.3 228.7L92.7 207.3L93.5 220.7L95.7 204.8L96.6 216.9L97.8 195.6" fill="none" stroke="#d2c81c" stroke-width="1.9" opacity="0.9"/>
<path d="M83.6 258.8L84.3 260.3L85.3 248.5L86.0 249.9L87.1 237.2L88.6 240.1L90.2 227.0L90.8 229.8L91.6 219.3" fill="none" stroke="#8a8012" stroke-width="1.6" opacity="0.7"/>
</g>
<g id="ch2-wave" stroke-linejoin="round">
<path d="M7.0 471.3L8.0 471.3L9.0 471.3L10.0 471.3L11.0 471.3L12.0 471.3L13.0 471.3L14.0 471.3L15.0 471.3L16.0 471.3L17.0 471.3L18.0 471.3L19.0 471.3L20.0 471.3L21.0 471.3L22.0 471.3L23.0 471.3L24.0 471.3L25.0 471.3L26.0 471.3L27.0 471.3L28.0 471.3L29.0 471.3L30.0 471.3L31.0 471.3L32.0 471.3L33.0 471.3L34.0 471.3L35.0 471.3L36.0 471.3L37.0 471.3L38.0 471.3L39.0 471.3L40.0 471.3L41.0 471.3L42.0 471.3L43.0 471.3L44.0 471.3L45.0 471.3L46.0 471.3L47.0 471.3L48.0 471.3L49.0 471.3L50.0 471.3L51.0 471.3L52.0 471.3L53.0 471.3L54.0 471.3L55.0 471.3L56.0 471.3L57.0 471.3L58.0 471.3L59.0 471.3L60.0 471.3L61.0 471.3L62.0 471.3L63.0 471.3L64.0 471.3L65.0 471.3L66.0 471.3L67.0 471.3L68.0 471.3L69.0 471.3L70.0 471.3L71.0 471.3L72.0 471.3L73.0 471.3L74.0 471.3L75.0 471.3L76.0 471.3L77.0 471.3L78.0 471.3L79.0 471.3L80.0 471.3L81.0 471.3L82.0 471.3L83.0 471.3L84.0 471.3L85.0 471.3L86.0 471.3L87.0 471.3L88.0 471.3L89.0 471.3L90.0 471.3L91.0 471.3L92.0 471.3L93.0 471.3L94.0 471.3L95.0 471.3L96.0 471.3L97.0 471.7L98.0 472.0L99.0 472.3L100.0 472.5L101.0 472.6L102.0 472.7L103.0 472.6L104.0 472.5L105.0 472.3L106.0 472.1L107.0 471.8L108.0 471.5L109.0 471.1L110.0 470.8L111.0 470.6L112.0 470.4L113.0 470.2L114.0 470.1L115.0 470.1L116.0 470.2L117.0 470.3L118.0 470.5L119.0 470.7L120.0 471.0L121.0 471.3L122.0 471.5L123.0 471.8L124.0 472.0L125.0 472.1L126.0 472.2L127.0 472.2L128.0 472.2L129.0 472.1L130.0 472.0L131.0 471.8L132.0 471.6L133.0 471.3L134.0 471.1L135.0 470.9L136.0 470.7L137.0 470.5L138.0 470.4L139.0 470.4L140.0 470.4L141.0 470.4L142.0 470.5L143.0 470.6L144.0 470.8L145.0 471.0L146.0 471.2L147.0 471.4L148.0 471.5L149.0 471.7L150.0 471.8L151.0 471.8L152.0 471.9L153.0 471.8L154.0 471.8L155.0 471.7L156.0 471.5L157.0 471.4L158.0 471.2L159.0 471.0L160.0 470.9L161.0 470.7L162.0 470.6L163.0 470.5L164.0 470.5L165.0 470.5L166.0 470.5L167.0 470.6L168.0 470.7L169.0 470.8L170.0 470.9L171.0 471.0L172.0 471.2L173.0 471.3L174.0 471.4L175.0 471.5L176.0 471.5L177.0 471.5L178.0 471.5L179.0 471.4L180.0 471.4L181.0 471.2L182.0 471.1L183.0 471.0L184.0 470.9L185.0 470.8L186.0 470.7L187.0 470.6L188.0 470.5L189.0 470.5L190.0 470.5L191.0 470.5L192.0 470.5L193.0 470.6L194.0 470.7L195.0 470.8L196.0 470.8L197.0 470.9L198.0 471.0L199.0 471.1L200.0 471.1L201.0 471.2L202.0 471.2L203.0 471.1L204.0 471.1L205.0 471.0L206.0 471.0L207.0 470.9L208.0 470.8L209.0 470.7L210.0 470.6L211.0 470.5L212.0 470.5L213.0 470.4L214.0 470.4L215.0 470.4L216.0 470.4L217.0 470.4L218.0 470.4L219.0 470.5L220.0 470.5L221.0 470.6L222.0 470.7L223.0 470.7L224.0 470.8L225.0 470.8L226.0 470.8L227.0 470.8L228.0 470.8L229.0 470.8L230.0 470.7L231.0 470.6L232.0 470.6L233.0 470.5L234.0 470.4L235.0 470.4L236.0 470.3L237.0 470.3L238.0 470.2L239.0 470.2L240.0 470.2L241.0 470.2L242.0 470.2L243.0 470.2L244.0 470.3L245.0 470.3L246.0 470.3L247.0 470.4L248.0 470.4L249.0 470.4L250.0 470.4L251.0 470.4L252.0 470.4L253.0 470.4L254.0 470.4L255.0 470.4L256.0 470.3L257.0 470.3L258.0 470.2L259.0 470.1L260.0 470.1L261.0 470.0L262.0 470.0L263.0 470.0L264.0 469.9L265.0 469.9L266.0 469.9L267.0 469.9L268.0 469.9L269.0 470.0L270.0 470.0L271.0 470.0L272.0 470.0L273.0 470.1L274.0 470.1L275.0 470.1L276.0 470.1L277.0 470.1L278.0 470.0L279.0 470.0L280.0 470.0L281.0 469.9L282.0 469.9L283.0 469.9L284.0 469.8L285.0 469.8L286.0 469.7L287.0 469.7L288.0 469.6L289.0 469.6L290.0 469.6L291.0 469.5L292.0 469.5L293.0 469.5L294.0 469.5L295.0 469.5L296.0 469.5L297.0 469.5L298.0 469.4L299.0 469.4L300.0 469.4L301.0 469.3L302.0 469.3L303.0 469.2L304.0 469.1L305.0 469.0L306.0 468.8L307.0 468.7L308.0 468.5L309.0 468.4L310.0 468.2L311.0 467.9L312.0 467.7L313.0 467.4L314.0 467.1L315.0 466.8L316.0 466.5L317.0 466.2L318.0 465.9L319.0 465.5L320.0 465.1L321.0 464.7L322.0 464.3L323.0 463.8L324.0 463.3L325.0 462.8L326.0 462.3L327.0 461.7L328.0 461.1L329.0 460.5L330.0 459.8L331.0 459.1L332.0 458.4L333.0 457.7L334.0 457.0L335.0 456.3L336.0 455.5L337.0 454.8L338.0 454.0L339.0 453.3L340.0 452.5L341.0 451.7L342.0 450.9L343.0 450.1L344.0 449.3L345.0 448.4L346.0 447.5L347.0 446.5L348.0 445.5L349.0 444.4L350.0 443.3L351.0 442.2L352.0 441.0L353.0 439.8L354.0 438.6L355.0 437.4L356.0 436.1L357.0 434.9L358.0 433.6L359.0 432.3L360.0 430.9L361.0 429.6L362.0 428.2L363.0 426.8L364.0 425.5L365.0 424.1L366.0 422.7L367.0 421.3L368.0 419.9L369.0 418.5L370.0 417.1L371.0 415.6L372.0 414.2L373.0 412.7L374.0 411.3L375.0 409.8L376.0 408.3L377.0 406.9L378.0 405.5L379.0 404.0L380.0 402.6L381.0 401.2L382.0 399.8L383.0 398.5L384.0 397.1L385.0 395.8L386.0 394.5L387.0 393.1L388.0 391.8L389.0 390.6L390.0 389.3L391.0 388.0L392.0 386.7L393.0 385.4L394.0 384.2L395.0 382.9L396.0 381.6L397.0 380.4L398.0 379.1L399.0 377.8L400.0 376.5L401.0 375.2L402.0 373.9L403.0 372.7L404.0 371.4L405.0 370.1L406.0 368.8L407.0 367.6L408.0 366.3L409.0 365.0L410.0 363.7L411.0 362.5L412.0 361.2L413.0 359.9L414.0 358.5L415.0 357.2L416.0 355.9L417.0 354.6L418.0 353.3L419.0 352.0L420.0 350.7L421.0 349.4L422.0 348.1L423.0 346.8L424.0 345.5L425.0 344.3L426.0 343.0L427.0 341.8L428.0 340.6L429.0 339.4L430.0 338.2L431.0 337.1L432.0 336.0L433.0 334.9L434.0 333.8L435.0 332.7L436.0 331.6L437.0 330.4L438.0 329.3L439.0 328.2L440.0 327.0L441.0 325.9L442.0 324.8L443.0 323.7L444.0 322.6L445.0 321.4L446.0 320.3L447.0 319.3L448.0 318.2L449.0 317.1L450.0 316.1L451.0 315.0L452.0 314.0L453.0 313.0L454.0 312.0L455.0 311.0L456.0 310.1L457.0 309.2L458.0 308.3L459.0 307.4L460.0 306.6L461.0 305.8L462.0 305.0L463.0 304.2L464.0 303.5L465.0 302.8L466.0 302.2L467.0 301.6L468.0 301.0L469.0 300.5L470.0 300.0L471.0 299.5L472.0 299.1L473.0 298.6L474.0 298.2L475.0 297.7L476.0 297.3L477.0 296.9L478.0 296.5L479.0 296.0L480.0 295.6L481.0 295.2L482.0 294.8L483.0 294.4L484.0 294.1L485.0 293.7L486.0 293.3L487.0 292.9L488.0 292.6L489.0 292.2L490.0 291.9L491.0 291.5L492.0 291.2L493.0 290.9L494.0 290.6L495.0 290.3L496.0 290.0L497.0 289.7L498.0 289.4L499.0 289.1L500.0 288.8L501.0 288.6L502.0 288.3L503.0 288.0L504.0 287.8L505.0 287.6L506.0 287.3L507.0 287.1L508.0 286.9L509.0 286.7L510.0 286.5L511.0 286.3L512.0 286.1L513.0 286.0L514.0 285.8L515.0 285.7L516.0 285.5L517.0 285.4L518.0 285.2L519.0 285.1L520.0 285.0L521.0 284.9L522.0 284.8L523.0 284.7L524.0 284.6L525.0 284.5L526.0 284.4L527.0 284.3L528.0 284.2L529.0 284.1L530.0 284.0L531.0 283.9L532.0 283.8L533.0 283.7L534.0 283.6L535.0 283.5L536.0 283.4L537.0 283.3L538.0 283.2L539.0 283.1L540.0 283.0L541.0 282.9L542.0 282.8L543.0 282.8L544.0 282.7L545.0 282.6L546.0 282.5L547.0 282.4L548.0 282.3L549.0 282.3L550.0 282.2L551.0 282.1L552.0 282.0" fill="none" stroke="#083a46" stroke-width="9" opacity="0.3"/>
<path d="M7.0 468.4L8.0 468.4L9.0 468.4L10.0 468.4L11.0 468.4L12.0 468.4L13.0 468.4L14.0 468.4L15.0 468.4L16.0 468.4L17.0 468.4L18.0 468.4L19.0 468.4L20.0 468.4L21.0 468.4L22.0 468.4L23.0 468.4L24.0 468.4L25.0 468.4L26.0 468.4L27.0 468.4L28.0 468.4L29.0 468.4L30.0 468.4L31.0 468.4L32.0 468.4L33.0 468.4L34.0 468.4L35.0 468.4L36.0 468.4L37.0 468.4L38.0 468.4L39.0 468.4L40.0 468.4L41.0 468.4L42.0 468.4L43.0 468.4L44.0 468.4L45.0 468.4L46.0 468.4L47.0 468.4L48.0 468.4L49.0 468.4L50.0 468.4L51.0 468.4L52.0 468.4L53.0 468.4L54.0 468.4L55.0 468.4L56.0 468.4L57.0 468.4L58.0 468.4L59.0 468.4L60.0 468.4L61.0 468.4L62.0 468.4L63.0 468.4L64.0 468.4L65.0 468.4L66.0 468.4L67.0 468.4L68.0 468.4L69.0 468.4L70.0 468.4L71.0 468.4L72.0 468.4L73.0 468.4L74.0 468.4L75.0 468.4L76.0 468.4L77.0 468.4L78.0 468.4L79.0 468.4L80.0 468.4L81.0 468.4L82.0 468.4L83.0 468.4L84.0 468.4L85.0 468.4L86.0 468.4L87.0 468.4L88.0 468.4L89.0 468.4L90.0 468.4L91.0 468.4L92.0 468.4L93.0 468.4L94.0 468.4L95.0 468.4L96.0 468.4L97.0 468.8L98.0 469.1L99.0 469.4L100.0 469.6L101.0 469.7L102.0 469.8L103.0 469.7L104.0 469.6L105.0 469.4L106.0 469.2L107.0 468.9L108.0 468.6L109.0 468.2L110.0 467.9L111.0 467.7L112.0 467.5L113.0 467.3L114.0 467.2L115.0 467.2L116.0 467.3L117.0 467.4L118.0 467.6L119.0 467.8L120.0 468.1L121.0 468.4L122.0 468.6L123.0 468.9L124.0 469.1L125.0 469.2L126.0 469.3L127.0 469.3L128.0 469.3L129.0 469.2L130.0 469.1L131.0 468.9L132.0 468.7L133.0 468.4L134.0 468.2L135.0 468.0L136.0 467.8L137.0 467.6L138.0 467.5L139.0 467.5L140.0 467.5L141.0 467.5L142.0 467.6L143.0 467.7L144.0 467.9L145.0 468.1L146.0 468.3L147.0 468.5L148.0 468.6L149.0 468.8L150.0 468.9L150.9 468.9L151.9 469.0L152.9 468.9L153.9 468.9L154.9 468.8L155.9 468.6L156.9 468.5L157.9 468.3L158.9 468.1L159.9 468.0L160.9 467.8L161.9 467.7L162.9 467.6L163.9 467.6L164.9 467.6L165.9 467.6L166.9 467.7L167.9 467.8L168.9 467.9L169.9 468.0L170.9 468.1L171.9 468.3L172.9 468.4L173.9 468.5L174.9 468.6L175.9 468.6L176.9 468.6L177.9 468.6L178.9 468.5L179.9 468.5L180.9 468.3L181.9 468.2L182.9 468.1L183.9 468.0L184.9 467.9L185.9 467.8L186.9 467.7L187.9 467.6L188.9 467.6L189.9 467.6L190.9 467.6L191.9 467.6L192.9 467.7L193.9 467.8L194.9 467.9L195.9 467.9L196.9 468.0L197.9 468.1L198.9 468.2L199.9 468.2L200.9 468.3L201.9 468.3L202.9 468.2L203.9 468.2L204.9 468.1L205.9 468.1L206.9 468.0L207.9 467.9L208.9 467.8L209.9 467.7L210.9 467.6L211.9 467.6L212.9 467.5L213.9 467.5L214.9 467.5L215.9 467.5L216.9 467.5L217.9 467.5L218.9 467.6L219.9 467.6L220.9 467.7L221.9 467.8L222.9 467.8L223.9 467.9L224.9 467.9L225.9 467.9L226.9 467.9L227.9 467.9L228.9 467.9L229.9 467.8L230.9 467.7L231.9 467.7L232.9 467.6L233.9 467.5L234.9 467.5L235.9 467.4L236.9 467.4L237.9 467.3L238.9 467.3L239.9 467.3L240.9 467.3L241.9 467.3L242.9 467.3L243.9 467.4L244.9 467.4L245.9 467.4L246.9 467.5L247.9 467.5L248.9 467.5L249.9 467.5L250.9 467.5L251.9 467.5L252.9 467.5L253.9 467.5L254.9 467.5L255.9 467.4L256.9 467.4L257.9 467.3L258.9 467.2L259.9 467.2L260.9 467.1L261.9 467.1L262.9 467.1L263.9 467.0L264.9 467.0L265.9 467.0L266.9 467.0L267.9 467.0L268.9 467.1L269.9 467.1L270.9 467.1L271.9 467.1L272.9 467.2L273.9 467.2L274.9 467.2L275.9 467.2L276.9 467.2L277.9 467.1L278.9 467.1L279.9 467.1L280.8 467.0L281.8 467.0L282.8 467.0L283.8 466.9L284.8 466.9L285.8 466.8L286.8 466.8L287.8 466.7L288.7 466.7L289.7 466.7L290.7 466.6L291.7 466.6L292.7 466.6L293.7 466.6L294.6 466.6L295.6 466.6L296.6 466.6L297.6 466.5L298.5 466.5L299.4 466.5L300.3 466.4L301.2 466.4L302.1 466.3L303.0 466.2L303.9 466.1L304.9 465.9L305.8 465.8L306.6 465.6L307.4 465.5L308.1 465.3L308.8 465.0L309.5 464.8L310.3 464.5L311.1 464.2L311.9 463.9L312.8 463.6L313.7 463.3L314.5 463.0L315.2 462.6L316.0 462.2L317.0 461.8L318.0 461.4L319.0 460.9L320.0 460.4L321.0 459.9L322.0 459.4L323.0 458.8L324.0 458.2L325.0 457.6L326.0 456.9L327.0 456.2L328.0 455.5L329.0 454.8L330.0 454.1L331.0 453.4L332.0 452.6L333.0 451.9L334.0 451.1L335.0 450.4L336.0 449.6L337.0 448.8L338.0 448.0L339.0 447.2L340.0 446.4L341.0 445.5L342.0 444.6L343.0 443.6L344.0 442.6L345.0 441.5L346.0 440.4L347.0 439.3L348.0 438.1L349.0 436.9L350.0 435.7L351.0 434.5L352.0 433.2L353.0 432.0L354.0 430.7L355.0 429.4L356.0 428.0L357.0 426.7L358.0 425.3L359.0 423.9L360.0 422.6L361.0 421.2L362.0 419.8L363.0 418.4L364.0 417.0L365.0 415.6L366.0 414.2L367.0 412.7L368.0 411.3L369.0 409.8L370.0 408.4L371.0 406.9L372.0 405.4L373.0 404.0L374.0 402.6L375.0 401.1L376.0 399.7L377.0 398.3L378.0 396.9L379.0 395.6L380.0 394.2L381.0 392.9L382.0 391.6L383.0 390.2L384.0 388.9L385.0 387.7L386.0 386.4L387.0 385.1L388.0 383.8L389.0 382.5L390.0 381.3L391.0 380.0L392.0 378.7L393.0 377.5L394.0 376.2L395.0 374.9L396.0 373.6L397.0 372.3L398.0 371.0L399.0 369.8L400.0 368.5L401.0 367.2L402.0 365.9L403.0 364.7L404.0 363.4L405.0 362.1L406.0 360.8L407.0 359.6L408.0 358.3L409.0 357.0L410.0 355.6L411.0 354.3L412.0 353.0L413.0 351.7L414.0 350.4L415.0 349.1L416.0 347.8L417.0 346.5L418.0 345.2L419.0 343.9L420.0 342.6L421.0 341.4L422.0 340.1L423.0 338.9L424.0 337.7L425.0 336.5L426.0 335.3L427.0 334.2L428.0 333.1L429.0 332.0L430.0 330.9L431.0 329.8L432.0 328.7L433.0 327.5L434.0 326.4L435.0 325.3L436.0 324.1L437.0 323.0L438.0 321.9L439.0 320.8L440.0 319.7L441.0 318.5L442.0 317.4L443.0 316.4L444.0 315.3L445.0 314.2L446.0 313.2L447.0 312.1L448.0 311.1L449.0 310.1L450.0 309.1L451.0 308.1L452.0 307.2L453.0 306.3L454.0 305.4L455.0 304.5L456.0 303.7L457.0 302.9L458.0 302.1L459.0 301.3L460.0 300.6L461.0 299.9L462.0 299.3L463.0 298.7L464.0 298.1L465.0 297.6L466.0 297.1L467.0 296.6L468.0 296.2L469.0 295.7L470.0 295.3L471.0 294.8L472.0 294.4L473.0 294.0L474.0 293.6L475.0 293.1L476.0 292.7L477.0 292.3L478.1 291.9L479.1 291.5L480.2 291.2L481.3 290.8L482.3 290.4L483.4 290.0L484.5 289.7L485.5 289.3L486.6 289.0L487.7 288.6L488.7 288.3L489.8 288.0L490.9 287.7L491.9 287.4L493.0 287.1L494.1 286.8L495.2 286.5L496.2 286.2L497.3 285.9L498.4 285.7L499.5 285.4L500.5 285.1L501.6 284.9L502.7 284.7L503.8 284.4L504.8 284.2L505.9 284.0L507.0 283.8L508.1 283.6L509.2 283.4L510.2 283.2L511.3 283.1L512.4 282.9L513.5 282.8L514.6 282.6L515.7 282.5L516.7 282.3L517.8 282.2L518.9 282.1L519.9 282.0L520.9 281.9L521.9 281.8L522.9 281.7L524.0 281.6L525.0 281.5L526.0 281.4L527.0 281.3L528.0 281.2L529.0 281.1L530.0 281.0L531.0 280.9L532.0 280.8L533.0 280.7L534.1 280.6L535.1 280.5L536.1 280.4L537.1 280.3L538.1 280.2L539.1 280.1L540.1 280.0L541.1 279.9L542.1 279.9L543.2 279.8L544.2 279.7L545.2 279.6L546.2 279.5L547.2 279.4L548.2 279.4L549.2 279.3L550.2 279.2L551.2 279.1L551.2 284.9L550.2 285.0L549.2 285.1L548.2 285.2L547.2 285.2L546.2 285.3L545.2 285.4L544.2 285.5L543.2 285.6L542.1 285.7L541.1 285.7L540.1 285.8L539.1 285.9L538.1 286.0L537.1 286.1L536.1 286.2L535.1 286.3L534.1 286.4L533.0 286.5L532.0 286.6L531.0 286.7L530.0 286.8L529.0 286.9L528.0 287.0L527.0 287.1L526.0 287.2L525.0 287.3L524.0 287.4L522.9 287.5L521.9 287.6L520.9 287.7L519.9 287.8L518.9 287.9L517.8 288.0L516.7 288.1L515.7 288.3L514.6 288.4L513.5 288.6L512.4 288.7L511.3 288.9L510.2 289.0L509.2 289.2L508.1 289.4L507.0 289.6L505.9 289.8L504.8 290.0L503.8 290.2L502.7 290.5L501.6 290.7L500.5 290.9L499.5 291.2L498.4 291.5L497.3 291.7L496.2 292.0L495.2 292.3L494.1 292.6L493.0 292.9L491.9 293.2L490.9 293.5L489.8 293.8L488.7 294.1L487.7 294.4L486.6 294.8L485.5 295.1L484.5 295.5L483.4 295.8L482.3 296.2L481.3 296.6L480.2 297.0L479.1 297.3L478.1 297.7L477.0 298.1L476.0 298.5L475.0 298.9L474.0 299.4L473.0 299.8L472.0 300.2L471.0 300.6L470.0 301.1L469.0 301.5L468.0 302.0L467.0 302.4L466.0 302.9L465.0 303.4L464.0 303.9L463.0 304.5L462.0 305.1L461.0 305.7L460.0 306.4L459.0 307.1L458.0 307.9L457.0 308.7L456.0 309.5L455.0 310.3L454.0 311.2L453.0 312.1L452.0 313.0L451.0 313.9L450.0 314.9L449.0 315.9L448.0 316.9L447.0 317.9L446.0 319.0L445.0 320.0L444.0 321.1L443.0 322.2L442.0 323.2L441.0 324.3L440.0 325.5L439.0 326.6L438.0 327.7L437.0 328.8L436.0 329.9L435.0 331.1L434.0 332.2L433.0 333.3L432.0 334.5L431.0 335.6L430.0 336.7L429.0 337.8L428.0 338.9L427.0 340.0L426.0 341.1L425.0 342.3L424.0 343.5L423.0 344.7L422.0 345.9L421.0 347.2L420.0 348.4L419.0 349.7L418.0 351.0L417.0 352.3L416.0 353.6L415.0 354.9L414.0 356.2L413.0 357.5L412.0 358.8L411.0 360.1L410.0 361.4L409.0 362.8L408.0 364.1L407.0 365.4L406.0 366.6L405.0 367.9L404.0 369.2L403.0 370.5L402.0 371.7L401.0 373.0L400.0 374.3L399.0 375.6L398.0 376.8L397.0 378.1L396.0 379.4L395.0 380.7L394.0 382.0L393.0 383.3L392.0 384.5L391.0 385.8L390.0 387.1L389.0 388.3L388.0 389.6L387.0 390.9L386.0 392.2L385.0 393.5L384.0 394.7L383.0 396.0L382.0 397.4L381.0 398.7L380.0 400.0L379.0 401.4L378.0 402.7L377.0 404.1L376.0 405.5L375.0 406.9L374.0 408.4L373.0 409.8L372.0 411.2L371.0 412.7L370.0 414.2L369.0 415.6L368.0 417.1L367.0 418.5L366.0 420.0L365.0 421.4L364.0 422.8L363.0 424.2L362.0 425.6L361.0 427.0L360.0 428.4L359.0 429.7L358.0 431.1L357.0 432.5L356.0 433.8L355.0 435.2L354.0 436.5L353.0 437.8L352.0 439.0L351.0 440.3L350.0 441.5L349.0 442.7L348.0 443.9L347.0 445.1L346.0 446.2L345.0 447.3L344.0 448.4L343.0 449.4L342.0 450.4L341.0 451.3L340.0 452.2L339.0 453.0L338.0 453.8L337.0 454.6L336.0 455.4L335.0 456.2L334.0 456.9L333.0 457.7L332.0 458.4L331.0 459.2L330.0 459.9L329.0 460.6L328.0 461.3L327.0 462.0L326.0 462.7L325.0 463.4L324.0 464.0L323.0 464.6L322.0 465.2L321.0 465.7L320.0 466.2L319.0 466.7L318.0 467.2L317.0 467.6L316.0 468.0L315.2 468.4L314.5 468.8L313.7 469.1L312.8 469.4L311.9 469.7L311.1 470.0L310.3 470.3L309.5 470.6L308.8 470.8L308.1 471.1L307.4 471.3L306.6 471.4L305.8 471.6L304.9 471.7L303.9 471.9L303.0 472.0L302.1 472.1L301.2 472.2L300.3 472.2L299.4 472.3L298.5 472.3L297.6 472.3L296.6 472.4L295.6 472.4L294.6 472.4L293.7 472.4L292.7 472.4L291.7 472.4L290.7 472.4L289.7 472.5L288.7 472.5L287.8 472.5L286.8 472.6L285.8 472.6L284.8 472.7L283.8 472.7L282.8 472.8L281.8 472.8L280.8 472.8L279.9 472.9L278.9 472.9L277.9 472.9L276.9 473.0L275.9 473.0L274.9 473.0L273.9 473.0L272.9 473.0L271.9 472.9L270.9 472.9L269.9 472.9L268.9 472.9L267.9 472.8L266.9 472.8L265.9 472.8L264.9 472.8L263.9 472.8L262.9 472.9L261.9 472.9L260.9 472.9L259.9 473.0L258.9 473.0L257.9 473.1L256.9 473.2L255.9 473.2L254.9 473.3L253.9 473.3L252.9 473.3L251.9 473.3L250.9 473.3L249.9 473.3L248.9 473.3L247.9 473.3L246.9 473.3L245.9 473.2L244.9 473.2L243.9 473.2L242.9 473.1L241.9 473.1L240.9 473.1L239.9 473.1L238.9 473.1L237.9 473.1L236.9 473.2L235.9 473.2L234.9 473.3L233.9 473.3L232.9 473.4L231.9 473.5L230.9 473.5L229.9 473.6L228.9 473.7L227.9 473.7L226.9 473.7L225.9 473.7L224.9 473.7L223.9 473.7L222.9 473.6L221.9 473.6L220.9 473.5L219.9 473.4L218.9 473.4L217.9 473.3L216.9 473.3L215.9 473.3L214.9 473.3L213.9 473.3L212.9 473.3L211.9 473.4L210.9 473.4L209.9 473.5L208.9 473.6L207.9 473.7L206.9 473.8L205.9 473.9L204.9 473.9L203.9 474.0L202.9 474.0L201.9 474.1L200.9 474.1L199.9 474.0L198.9 474.0L197.9 473.9L196.9 473.8L195.9 473.7L194.9 473.7L193.9 473.6L192.9 473.5L191.9 473.4L190.9 473.4L189.9 473.4L188.9 473.4L187.9 473.4L186.9 473.5L185.9 473.6L184.9 473.7L183.9 473.8L182.9 473.9L181.9 474.0L180.9 474.1L179.9 474.3L178.9 474.3L177.9 474.4L176.9 474.4L175.9 474.4L174.9 474.4L173.9 474.3L172.9 474.2L171.9 474.1L170.9 473.9L169.9 473.8L168.9 473.7L167.9 473.6L166.9 473.5L165.9 473.4L164.9 473.4L163.9 473.4L162.9 473.4L161.9 473.5L160.9 473.6L159.9 473.8L158.9 473.9L157.9 474.1L156.9 474.3L155.9 474.4L154.9 474.6L153.9 474.7L152.9 474.7L151.9 474.8L150.9 474.7L150.0 474.7L149.0 474.6L148.0 474.4L147.0 474.3L146.0 474.1L145.0 473.9L144.0 473.7L143.0 473.5L142.0 473.4L141.0 473.3L140.0 473.3L139.0 473.3L138.0 473.3L137.0 473.4L136.0 473.6L135.0 473.8L134.0 474.0L133.0 474.2L132.0 474.5L131.0 474.7L130.0 474.9L129.0 475.0L128.0 475.1L127.0 475.1L126.0 475.1L125.0 475.0L124.0 474.9L123.0 474.7L122.0 474.4L121.0 474.2L120.0 473.9L119.0 473.6L118.0 473.4L117.0 473.2L116.0 473.1L115.0 473.0L114.0 473.0L113.0 473.1L112.0 473.3L111.0 473.5L110.0 473.7L109.0 474.0L108.0 474.4L107.0 474.7L106.0 475.0L105.0 475.2L104.0 475.4L103.0 475.5L102.0 475.6L101.0 475.5L100.0 475.4L99.0 475.2L98.0 474.9L97.0 474.6L96.0 474.2L95.0 474.2L94.0 474.2L93.0 474.2L92.0 474.2L91.0 474.2L90.0 474.2L89.0 474.2L88.0 474.2L87.0 474.2L86.0 474.2L85.0 474.2L84.0 474.2L83.0 474.2L82.0 474.2L81.0 474.2L80.0 474.2L79.0 474.2L78.0 474.2L77.0 474.2L76.0 474.2L75.0 474.2L74.0 474.2L73.0 474.2L72.0 474.2L71.0 474.2L70.0 474.2L69.0 474.2L68.0 474.2L67.0 474.2L66.0 474.2L65.0 474.2L64.0 474.2L63.0 474.2L62.0 474.2L61.0 474.2L60.0 474.2L59.0 474.2L58.0 474.2L57.0 474.2L56.0 474.2L55.0 474.2L54.0 474.2L53.0 474.2L52.0 474.2L51.0 474.2L50.0 474.2L49.0 474.2L48.0 474.2L47.0 474.2L46.0 474.2L45.0 474.2L44.0 474.2L43.0 474.2L42.0 474.2L41.0 474.2L40.0 474.2L39.0 474.2L38.0 474.2L37.0 474.2L36.0 474.2L35.0 474.2L34.0 474.2L33.0 474.2L32.0 474.2L31.0 474.2L30.0 474.2L29.0 474.2L28.0 474.2L27.0 474.2L26.0 474.2L25.0 474.2L24.0 474.2L23.0 474.2L22.0 474.2L21.0 474.2L20.0 474.2L19.0 474.2L18.0 474.2L17.0 474.2L16.0 474.2L15.0 474.2L14.0 474.2L13.0 474.2L12.0 474.2L11.0 474.2L10.0 474.2L9.0 474.2L8.0 474.2L7.0 474.2Z" fill="#1391ac" stroke="#1391ac" stroke-width="0.8"/>
<path d="M7.0 468.4L8.0 468.4L9.0 468.4L10.0 468.4L11.0 468.4L12.0 468.4L13.0 468.4L14.0 468.4L15.0 468.4L16.0 468.4L17.0 468.4L18.0 468.4L19.0 468.4L20.0 468.4L21.0 468.4L22.0 468.4L23.0 468.4L24.0 468.4L25.0 468.4L26.0 468.4L27.0 468.4L28.0 468.4L29.0 468.4L30.0 468.4L31.0 468.4L32.0 468.4L33.0 468.4L34.0 468.4L35.0 468.4L36.0 468.4L37.0 468.4L38.0 468.4L39.0 468.4L40.0 468.4L41.0 468.4L42.0 468.4L43.0 468.4L44.0 468.4L45.0 468.4L46.0 468.4L47.0 468.4L48.0 468.4L49.0 468.4L50.0 468.4L51.0 468.4L52.0 468.4L53.0 468.4L54.0 468.4L55.0 468.4L56.0 468.4L57.0 468.4L58.0 468.4L59.0 468.4L60.0 468.4L61.0 468.4L62.0 468.4L63.0 468.4L64.0 468.4L65.0 468.4L66.0 468.4L67.0 468.4L68.0 468.4L69.0 468.4L70.0 468.4L71.0 468.4L72.0 468.4L73.0 468.4L74.0 468.4L75.0 468.4L76.0 468.4L77.0 468.4L78.0 468.4L79.0 468.4L80.0 468.4L81.0 468.4L82.0 468.4L83.0 468.4L84.0 468.4L85.0 468.4L86.0 468.4L87.0 468.4L88.0 468.4L89.0 468.4L90.0 468.4L91.0 468.4L92.0 468.4L93.0 468.4L94.0 468.4L95.0 468.4L96.0 468.4L97.0 468.8L98.0 469.1L99.0 469.4L100.0 469.6L101.0 469.7L102.0 469.8L103.0 469.7L104.0 469.6L105.0 469.4L106.0 469.2L107.0 468.9L108.0 468.6L109.0 468.2L110.0 467.9L111.0 467.7L112.0 467.5L113.0 467.3L114.0 467.2L115.0 467.2L116.0 467.3L117.0 467.4L118.0 467.6L119.0 467.8L120.0 468.1L121.0 468.4L122.0 468.6L123.0 468.9L124.0 469.1L125.0 469.2L126.0 469.3L127.0 469.3L128.0 469.3L129.0 469.2L130.0 469.1L131.0 468.9L132.0 468.7L133.0 468.4L134.0 468.2L135.0 468.0L136.0 467.8L137.0 467.6L138.0 467.5L139.0 467.5L140.0 467.5L141.0 467.5L142.0 467.6L143.0 467.7L144.0 467.9L145.0 468.1L146.0 468.3L147.0 468.5L148.0 468.6L149.0 468.8L150.0 468.9L151.1 468.9L152.1 469.0L153.1 468.9L154.1 468.9L155.1 468.8L156.1 468.6L157.1 468.5L158.1 468.3L159.1 468.1L160.1 468.0L161.1 467.8L162.1 467.7L163.1 467.6L164.1 467.6L165.1 467.6L166.1 467.6L167.1 467.7L168.1 467.8L169.1 467.9L170.1 468.0L171.1 468.1L172.1 468.3L173.1 468.4L174.1 468.5L175.1 468.6L176.1 468.6L177.1 468.6L178.1 468.6L179.1 468.5L180.1 468.5L181.1 468.3L182.1 468.2L183.1 468.1L184.1 468.0L185.1 467.9L186.1 467.8L187.1 467.7L188.1 467.6L189.1 467.6L190.1 467.6L191.1 467.6L192.1 467.6L193.1 467.7L194.1 467.8L195.1 467.9L196.1 467.9L197.1 468.0L198.1 468.1L199.1 468.2L200.1 468.2L201.1 468.3L202.1 468.3L203.1 468.2L204.1 468.2L205.1 468.1L206.1 468.1L207.1 468.0L208.1 467.9L209.1 467.8L210.1 467.7L211.1 467.6L212.1 467.6L213.1 467.5L214.1 467.5L215.1 467.5L216.1 467.5L217.1 467.5L218.1 467.5L219.1 467.6L220.1 467.6L221.1 467.7L222.1 467.8L223.1 467.8L224.1 467.9L225.1 467.9L226.1 467.9L227.1 467.9L228.1 467.9L229.1 467.9L230.1 467.8L231.1 467.7L232.1 467.7L233.1 467.6L234.1 467.5L235.1 467.5L236.1 467.4L237.1 467.4L238.1 467.3L239.1 467.3L240.1 467.3L241.1 467.3L242.1 467.3L243.1 467.3L244.1 467.4L245.1 467.4L246.1 467.4L247.1 467.5L248.1 467.5L249.1 467.5L250.1 467.5L251.1 467.5L252.1 467.5L253.1 467.5L254.1 467.5L255.1 467.5L256.1 467.4L257.1 467.4L258.1 467.3L259.1 467.2L260.1 467.2L261.1 467.1L262.1 467.1L263.1 467.1L264.1 467.0L265.1 467.0L266.1 467.0L267.1 467.0L268.1 467.0L269.1 467.1L270.1 467.1L271.1 467.1L272.1 467.1L273.1 467.2L274.1 467.2L275.1 467.2L276.1 467.2L277.1 467.2L278.1 467.1L279.1 467.1L280.1 467.1L281.2 467.0L282.2 467.0L283.2 467.0L284.2 466.9L285.2 466.9L286.2 466.8L287.2 466.8L288.2 466.7L289.3 466.7L290.3 466.7L291.3 466.6L292.3 466.6L293.3 466.6L294.3 466.6L295.4 466.6L296.4 466.6L297.4 466.6L298.4 466.5L299.5 466.5L300.6 466.5L301.7 466.4L302.8 466.4L303.9 466.3L305.0 466.2L306.1 466.1L307.1 465.9L308.2 465.8L309.4 465.6L310.6 465.5L311.9 465.3L313.2 465.0L314.5 464.8L315.7 464.5L316.9 464.2L318.1 463.9L319.2 463.6L320.3 463.3L321.5 463.0L322.8 462.6L324.0 462.2L325.0 461.8L326.0 461.4L327.0 460.9L328.0 460.4L329.0 459.9L330.0 459.4L331.0 458.8L332.0 458.2L333.0 457.6L334.0 456.9L335.0 456.2L336.0 455.5L337.0 454.8L338.0 454.1L339.0 453.4L340.0 452.6L341.0 451.9L342.0 451.1L343.0 450.4L344.0 449.6L345.0 448.8L346.0 448.0L347.0 447.2L348.0 446.4L349.0 445.5L350.0 444.6L351.0 443.6L352.0 442.6L353.0 441.5L354.0 440.4L355.0 439.3L356.0 438.1L357.0 436.9L358.0 435.7L359.0 434.5L360.0 433.2L361.0 432.0L362.0 430.7L363.0 429.4L364.0 428.0L365.0 426.7L366.0 425.3L367.0 423.9L368.0 422.6L369.0 421.2L370.0 419.8L371.0 418.4L372.0 417.0L373.0 415.6L374.0 414.2L375.0 412.7L376.0 411.3L377.0 409.8L378.0 408.4L379.0 406.9L380.0 405.4L381.0 404.0L382.0 402.6L383.0 401.1L384.0 399.7L385.0 398.3L386.0 396.9L387.0 395.6L388.0 394.2L389.0 392.9L390.0 391.6L391.0 390.2L392.0 388.9L393.0 387.7L394.0 386.4L395.0 385.1L396.0 383.8L397.0 382.5L398.0 381.3L399.0 380.0L400.0 378.7L401.0 377.5L402.0 376.2L403.0 374.9L404.0 373.6L405.0 372.3L406.0 371.0L407.0 369.8L408.0 368.5L409.0 367.2L410.0 365.9L411.0 364.7L412.0 363.4L413.0 362.1L414.0 360.8L415.0 359.6L416.0 358.3L417.0 357.0L418.0 355.6L419.0 354.3L420.0 353.0L421.0 351.7L422.0 350.4L423.0 349.1L424.0 347.8L425.0 346.5L426.0 345.2L427.0 343.9L428.0 342.6L429.0 341.4L430.0 340.1L431.0 338.9L432.0 337.7L433.0 336.5L434.0 335.3L435.0 334.2L436.0 333.1L437.0 332.0L438.0 330.9L439.0 329.8L440.0 328.7L441.0 327.5L442.0 326.4L443.0 325.3L444.0 324.1L445.0 323.0L446.0 321.9L447.0 320.8L448.0 319.7L449.0 318.5L450.0 317.4L451.0 316.4L452.0 315.3L453.0 314.2L454.0 313.2L455.0 312.1L456.0 311.1L457.0 310.1L458.0 309.1L459.0 308.1L460.0 307.2L461.0 306.3L462.0 305.4L463.0 304.5L464.0 303.7L465.0 302.9L466.0 302.1L467.0 301.3L468.0 300.6L469.0 299.9L470.0 299.3L471.0 298.7L472.0 298.1L473.0 297.6L474.0 297.1L475.0 296.6L476.0 296.2L477.0 295.7L478.0 295.3L479.0 294.8L480.0 294.4L481.0 294.0L482.0 293.6L483.0 293.1L484.0 292.7L485.0 292.3L485.9 291.9L486.9 291.5L487.8 291.2L488.7 290.8L489.7 290.4L490.6 290.0L491.5 289.7L492.5 289.3L493.4 289.0L494.3 288.6L495.3 288.3L496.2 288.0L497.1 287.7L498.1 287.4L499.0 287.1L499.9 286.8L500.8 286.5L501.8 286.2L502.7 285.9L503.6 285.7L504.5 285.4L505.5 285.1L506.4 284.9L507.3 284.7L508.2 284.4L509.2 284.2L510.1 284.0L511.0 283.8L511.9 283.6L512.8 283.4L513.8 283.2L514.7 283.1L515.6 282.9L516.5 282.8L517.4 282.6L518.3 282.5L519.3 282.3L520.2 282.2L521.1 282.1L522.1 282.0L523.1 281.9L524.1 281.8L525.1 281.7L526.0 281.6L527.0 281.5L528.0 281.4L529.0 281.3L530.0 281.2L531.0 281.1L532.0 281.0L533.0 280.9L534.0 280.8L535.0 280.7L535.9 280.6L536.9 280.5L537.9 280.4L538.9 280.3L539.9 280.2L540.9 280.1L541.9 280.0L542.9 279.9L543.9 279.9L544.8 279.8L545.8 279.7L546.8 279.6L547.8 279.5L548.8 279.4L549.8 279.4L550.8 279.3L551.8 279.2L552.8 279.1L552.8 284.9L551.8 285.0L550.8 285.1L549.8 285.2L548.8 285.2L547.8 285.3L546.8 285.4L545.8 285.5L544.8 285.6L543.9 285.7L542.9 285.7L541.9 285.8L540.9 285.9L539.9 286.0L538.9 286.1L537.9 286.2L536.9 286.3L535.9 286.4L535.0 286.5L534.0 286.6L533.0 286.7L532.0 286.8L531.0 286.9L530.0 287.0L529.0 287.1L528.0 287.2L527.0 287.3L526.0 287.4L525.1 287.5L524.1 287.6L523.1 287.7L522.1 287.8L521.1 287.9L520.2 288.0L519.3 288.1L518.3 288.3L517.4 288.4L516.5 288.6L515.6 288.7L514.7 288.9L513.8 289.0L512.8 289.2L511.9 289.4L511.0 289.6L510.1 289.8L509.2 290.0L508.2 290.2L507.3 290.5L506.4 290.7L505.5 290.9L504.5 291.2L503.6 291.5L502.7 291.7L501.8 292.0L500.8 292.3L499.9 292.6L499.0 292.9L498.1 293.2L497.1 293.5L496.2 293.8L495.3 294.1L494.3 294.4L493.4 294.8L492.5 295.1L491.5 295.5L490.6 295.8L489.7 296.2L488.7 296.6L487.8 297.0L486.9 297.3L485.9 297.7L485.0 298.1L484.0 298.5L483.0 298.9L482.0 299.4L481.0 299.8L480.0 300.2L479.0 300.6L478.0 301.1L477.0 301.5L476.0 302.0L475.0 302.4L474.0 302.9L473.0 303.4L472.0 303.9L471.0 304.5L470.0 305.1L469.0 305.7L468.0 306.4L467.0 307.1L466.0 307.9L465.0 308.7L464.0 309.5L463.0 310.3L462.0 311.2L461.0 312.1L460.0 313.0L459.0 313.9L458.0 314.9L457.0 315.9L456.0 316.9L455.0 317.9L454.0 319.0L453.0 320.0L452.0 321.1L451.0 322.2L450.0 323.2L449.0 324.3L448.0 325.5L447.0 326.6L446.0 327.7L445.0 328.8L444.0 329.9L443.0 331.1L442.0 332.2L441.0 333.3L440.0 334.5L439.0 335.6L438.0 336.7L437.0 337.8L436.0 338.9L435.0 340.0L434.0 341.1L433.0 342.3L432.0 343.5L431.0 344.7L430.0 345.9L429.0 347.2L428.0 348.4L427.0 349.7L426.0 351.0L425.0 352.3L424.0 353.6L423.0 354.9L422.0 356.2L421.0 357.5L420.0 358.8L419.0 360.1L418.0 361.4L417.0 362.8L416.0 364.1L415.0 365.4L414.0 366.6L413.0 367.9L412.0 369.2L411.0 370.5L410.0 371.7L409.0 373.0L408.0 374.3L407.0 375.6L406.0 376.8L405.0 378.1L404.0 379.4L403.0 380.7L402.0 382.0L401.0 383.3L400.0 384.5L399.0 385.8L398.0 387.1L397.0 388.3L396.0 389.6L395.0 390.9L394.0 392.2L393.0 393.5L392.0 394.7L391.0 396.0L390.0 397.4L389.0 398.7L388.0 400.0L387.0 401.4L386.0 402.7L385.0 404.1L384.0 405.5L383.0 406.9L382.0 408.4L381.0 409.8L380.0 411.2L379.0 412.7L378.0 414.2L377.0 415.6L376.0 417.1L375.0 418.5L374.0 420.0L373.0 421.4L372.0 422.8L371.0 424.2L370.0 425.6L369.0 427.0L368.0 428.4L367.0 429.7L366.0 431.1L365.0 432.5L364.0 433.8L363.0 435.2L362.0 436.5L361.0 437.8L360.0 439.0L359.0 440.3L358.0 441.5L357.0 442.7L356.0 443.9L355.0 445.1L354.0 446.2L353.0 447.3L352.0 448.4L351.0 449.4L350.0 450.4L349.0 451.3L348.0 452.2L347.0 453.0L346.0 453.8L345.0 454.6L344.0 455.4L343.0 456.2L342.0 456.9L341.0 457.7L340.0 458.4L339.0 459.2L338.0 459.9L337.0 460.6L336.0 461.3L335.0 462.0L334.0 462.7L333.0 463.4L332.0 464.0L331.0 464.6L330.0 465.2L329.0 465.7L328.0 466.2L327.0 466.7L326.0 467.2L325.0 467.6L324.0 468.0L322.8 468.4L321.5 468.8L320.3 469.1L319.2 469.4L318.1 469.7L316.9 470.0L315.7 470.3L314.5 470.6L313.2 470.8L311.9 471.1L310.6 471.3L309.4 471.4L308.2 471.6L307.1 471.7L306.1 471.9L305.0 472.0L303.9 472.1L302.8 472.2L301.7 472.2L300.6 472.3L299.5 472.3L298.4 472.3L297.4 472.4L296.4 472.4L295.4 472.4L294.3 472.4L293.3 472.4L292.3 472.4L291.3 472.4L290.3 472.5L289.3 472.5L288.2 472.5L287.2 472.6L286.2 472.6L285.2 472.7L284.2 472.7L283.2 472.8L282.2 472.8L281.2 472.8L280.1 472.9L279.1 472.9L278.1 472.9L277.1 473.0L276.1 473.0L275.1 473.0L274.1 473.0L273.1 473.0L272.1 472.9L271.1 472.9L270.1 472.9L269.1 472.9L268.1 472.8L267.1 472.8L266.1 472.8L265.1 472.8L264.1 472.8L263.1 472.9L262.1 472.9L261.1 472.9L260.1 473.0L259.1 473.0L258.1 473.1L257.1 473.2L256.1 473.2L255.1 473.3L254.1 473.3L253.1 473.3L252.1 473.3L251.1 473.3L250.1 473.3L249.1 473.3L248.1 473.3L247.1 473.3L246.1 473.2L245.1 473.2L244.1 473.2L243.1 473.1L242.1 473.1L241.1 473.1L240.1 473.1L239.1 473.1L238.1 473.1L237.1 473.2L236.1 473.2L235.1 473.3L234.1 473.3L233.1 473.4L232.1 473.5L231.1 473.5L230.1 473.6L229.1 473.7L228.1 473.7L227.1 473.7L226.1 473.7L225.1 473.7L224.1 473.7L223.1 473.6L222.1 473.6L221.1 473.5L220.1 473.4L219.1 473.4L218.1 473.3L217.1 473.3L216.1 473.3L215.1 473.3L214.1 473.3L213.1 473.3L212.1 473.4L211.1 473.4L210.1 473.5L209.1 473.6L208.1 473.7L207.1 473.8L206.1 473.9L205.1 473.9L204.1 474.0L203.1 474.0L202.1 474.1L201.1 474.1L200.1 474.0L199.1 474.0L198.1 473.9L197.1 473.8L196.1 473.7L195.1 473.7L194.1 473.6L193.1 473.5L192.1 473.4L191.1 473.4L190.1 473.4L189.1 473.4L188.1 473.4L187.1 473.5L186.1 473.6L185.1 473.7L184.1 473.8L183.1 473.9L182.1 474.0L181.1 474.1L180.1 474.3L179.1 474.3L178.1 474.4L177.1 474.4L176.1 474.4L175.1 474.4L174.1 474.3L173.1 474.2L172.1 474.1L171.1 473.9L170.1 473.8L169.1 473.7L168.1 473.6L167.1 473.5L166.1 473.4L165.1 473.4L164.1 473.4L163.1 473.4L162.1 473.5L161.1 473.6L160.1 473.8L159.1 473.9L158.1 474.1L157.1 474.3L156.1 474.4L155.1 474.6L154.1 474.7L153.1 474.7L152.1 474.8L151.1 474.7L150.0 474.7L149.0 474.6L148.0 474.4L147.0 474.3L146.0 474.1L145.0 473.9L144.0 473.7L143.0 473.5L142.0 473.4L141.0 473.3L140.0 473.3L139.0 473.3L138.0 473.3L137.0 473.4L136.0 473.6L135.0 473.8L134.0 474.0L133.0 474.2L132.0 474.5L131.0 474.7L130.0 474.9L129.0 475.0L128.0 475.1L127.0 475.1L126.0 475.1L125.0 475.0L124.0 474.9L123.0 474.7L122.0 474.4L121.0 474.2L120.0 473.9L119.0 473.6L118.0 473.4L117.0 473.2L116.0 473.1L115.0 473.0L114.0 473.0L113.0 473.1L112.0 473.3L111.0 473.5L110.0 473.7L109.0 474.0L108.0 474.4L107.0 474.7L106.0 475.0L105.0 475.2L104.0 475.4L103.0 475.5L102.0 475.6L101.0 475.5L100.0 475.4L99.0 475.2L98.0 474.9L97.0 474.6L96.0 474.2L95.0 474.2L94.0 474.2L93.0 474.2L92.0 474.2L91.0 474.2L90.0 474.2L89.0 474.2L88.0 474.2L87.0 474.2L86.0 474.2L85.0 474.2L84.0 474.2L83.0 474.2L82.0 474.2L81.0 474.2L80.0 474.2L79.0 474.2L78.0 474.2L77.0 474.2L76.0 474.2L75.0 474.2L74.0 474.2L73.0 474.2L72.0 474.2L71.0 474.2L70.0 474.2L69.0 474.2L68.0 474.2L67.0 474.2L66.0 474.2L65.0 474.2L64.0 474.2L63.0 474.2L62.0 474.2L61.0 474.2L60.0 474.2L59.0 474.2L58.0 474.2L57.0 474.2L56.0 474.2L55.0 474.2L54.0 474.2L53.0 474.2L52.0 474.2L51.0 474.2L50.0 474.2L49.0 474.2L48.0 474.2L47.0 474.2L46.0 474.2L45.0 474.2L44.0 474.2L43.0 474.2L42.0 474.2L41.0 474.2L40.0 474.2L39.0 474.2L38.0 474.2L37.0 474.2L36.0 474.2L35.0 474.2L34.0 474.2L33.0 474.2L32.0 474.2L31.0 474.2L30.0 474.2L29.0 474.2L28.0 474.2L27.0 474.2L26.0 474.2L25.0 474.2L24.0 474.2L23.0 474.2L22.0 474.2L21.0 474.2L20.0 474.2L19.0 474.2L18.0 474.2L17.0 474.2L16.0 474.2L15.0 474.2L14.0 474.2L13.0 474.2L12.0 474.2L11.0 474.2L10.0 474.2L9.0 474.2L8.0 474.2L7.0 474.2Z" fill="#1fc2e1" stroke="#1fc2e1" stroke-width="0.8"/>
<path d="M7.0 471.3L8.0 471.3L9.0 471.3L10.0 471.3L11.0 471.3L12.0 471.3L13.0 471.3L14.0 471.3L15.0 471.3L16.0 471.3L17.0 471.3L18.0 471.3L19.0 471.3L20.0 471.3L21.0 471.3L22.0 471.3L23.0 471.3L24.0 471.3L25.0 471.3L26.0 471.3L27.0 471.3L28.0 471.3L29.0 471.3L30.0 471.3L31.0 471.3L32.0 471.3L33.0 471.3L34.0 471.3L35.0 471.3L36.0 471.3L37.0 471.3L38.0 471.3L39.0 471.3L40.0 471.3L41.0 471.3L42.0 471.3L43.0 471.3L44.0 471.3L45.0 471.3L46.0 471.3L47.0 471.3L48.0 471.3L49.0 471.3L50.0 471.3L51.0 471.3L52.0 471.3L53.0 471.3L54.0 471.3L55.0 471.3L56.0 471.3L57.0 471.3L58.0 471.3L59.0 471.3L60.0 471.3L61.0 471.3L62.0 471.3L63.0 471.3L64.0 471.3L65.0 471.3L66.0 471.3L67.0 471.3L68.0 471.3L69.0 471.3L70.0 471.3L71.0 471.3L72.0 471.3L73.0 471.3L74.0 471.3L75.0 471.3L76.0 471.3L77.0 471.3L78.0 471.3L79.0 471.3L80.0 471.3L81.0 471.3L82.0 471.3L83.0 471.3L84.0 471.3L85.0 471.3L86.0 471.3L87.0 471.3L88.0 471.3L89.0 471.3L90.0 471.3L91.0 471.3L92.0 471.3L93.0 471.3L94.0 471.3L95.0 471.3L96.0 471.3M100.0 472.5L101.0 472.6L102.0 472.7L103.0 472.6L104.0 472.5M112.0 470.4L113.0 470.2L114.0 470.1L115.0 470.1L116.0 470.2L117.0 470.3M124.0 472.0L125.0 472.1L126.0 472.2L127.0 472.2L128.0 472.2L129.0 472.1L130.0 472.0L131.0 471.8M136.0 470.7L137.0 470.5L138.0 470.4L139.0 470.4L140.0 470.4L141.0 470.4L142.0 470.5L143.0 470.6L144.0 470.8L145.0 471.0L146.0 471.2L147.0 471.4L148.0 471.5L149.0 471.7L150.0 471.8L151.0 471.8L152.0 471.9L153.0 471.8L154.0 471.8L155.0 471.7L156.0 471.5L157.0 471.4L158.0 471.2L159.0 471.0L160.0 470.9L161.0 470.7L162.0 470.6L163.0 470.5L164.0 470.5L165.0 470.5L166.0 470.5L167.0 470.6L168.0 470.7L169.0 470.8L170.0 470.9L171.0 471.0L172.0 471.2L173.0 471.3L174.0 471.4L175.0 471.5L176.0 471.5L177.0 471.5L178.0 471.5L179.0 471.4L180.0 471.4L181.0 471.2L182.0 471.1L183.0 471.0L184.0 470.9L185.0 470.8L186.0 470.7L187.0 470.6L188.0 470.5L189.0 470.5L190.0 470.5L191.0 470.5L192.0 470.5L193.0 470.6L194.0 470.7L195.0 470.8L196.0 470.8L197.0 470.9L198.0 471.0L199.0 471.1L200.0 471.1L201.0 471.2L202.0 471.2L203.0 471.1L204.0 471.1L205.0 471.0L206.0 471.0L207.0 470.9L208.0 470.8L209.0 470.7L210.0 470.6L211.0 470.5L212.0 470.5L213.0 470.4L214.0 470.4L215.0 470.4L216.0 470.4L217.0 470.4L218.0 470.4L219.0 470.5L220.0 470.5L221.0 470.6L222.0 470.7L223.0 470.7L224.0 470.8L225.0 470.8L226.0 470.8L227.0 470.8L228.0 470.8L229.0 470.8L230.0 470.7L231.0 470.6L232.0 470.6L233.0 470.5L234.0 470.4L235.0 470.4L236.0 470.3L237.0 470.3L238.0 470.2L239.0 470.2L240.0 470.2L241.0 470.2L242.0 470.2L243.0 470.2L244.0 470.3L245.0 470.3L246.0 470.3L247.0 470.4L248.0 470.4L249.0 470.4L250.0 470.4L251.0 470.4L252.0 470.4L253.0 470.4L254.0 470.4L255.0 470.4L256.0 470.3L257.0 470.3L258.0 470.2L259.0 470.1L260.0 470.1L261.0 470.0L262.0 470.0L263.0 470.0L264.0 469.9L265.0 469.9L266.0 469.9L267.0 469.9L268.0 469.9L269.0 470.0L270.0 470.0L271.0 470.0L272.0 470.0L273.0 470.1L274.0 470.1L275.0 470.1L276.0 470.1L277.0 470.1L278.0 470.0L279.0 470.0L280.0 470.0L281.0 469.9L282.0 469.9L283.0 469.9L284.0 469.8L285.0 469.8L286.0 469.7L287.0 469.7L288.0 469.6L289.0 469.6L290.0 469.6L291.0 469.5L292.0 469.5L293.0 469.5L294.0 469.5L295.0 469.5L296.0 469.5L297.0 469.5L298.0 469.4L299.0 469.4L300.0 469.4L301.0 469.3L302.0 469.3L303.0 469.2L304.0 469.1L305.0 469.0L306.0 468.8L307.0 468.7L308.0 468.5L309.0 468.4M510.0 286.5L511.0 286.3L512.0 286.1L513.0 286.0L514.0 285.8L515.0 285.7L516.0 285.5L517.0 285.4L518.0 285.2L519.0 285.1L520.0 285.0L521.0 284.9L522.0 284.8L523.0 284.7L524.0 284.6L525.0 284.5L526.0 284.4L527.0 284.3L528.0 284.2L529.0 284.1L530.0 284.0L531.0 283.9L532.0 283.8L533.0 283.7L534.0 283.6L535.0 283.5L536.0 283.4L537.0 283.3L538.0 283.2L539.0 283.1L540.0 283.0L541.0 282.9L542.0 282.8L543.0 282.8L544.0 282.7L545.0 282.6L546.0 282.5L547.0 282.4L548.0 282.3L549.0 282.3L550.0 282.2L551.0 282.1L552.0 282.0" fill="none" stroke="#25cfee" stroke-width="2.2"/>
<path d="M75.6 466.3V477.3M77.6 458.3V481.3M80.1 462.3V485.3M82.2 455.3V482.3M84.4 452.3V488.3M86.0 459.3V486.3M87.4 453.3V488.3M89.0 460.3V480.3M90.2 454.3V485.3M92.2 459.3V479.3M94.0 465.3V477.3" fill="none" stroke="#17a4c2" stroke-width="1.5" opacity="0.85"/>
</g>
<g id="markers">
<path d="M3 270.6H23.2L30.7 279.6L23.2 288.7H3Z" fill="#c6ba3e"/>
<text x="6.9" y="283.4" font-size="11.5" fill="#36320e" textLength="10.6" lengthAdjust="spacingAndGlyphs">C1</text>
<path d="M4.2 469.9H22.8L30 477.9L22.8 486H4.2Z" fill="#001418" stroke="#1fb8d4" stroke-width="1.4"/>
<text x="6.9" y="482.2" font-size="11.5" fill="#24c2e0" textLength="12.2" lengthAdjust="spacingAndGlyphs" stroke="#24c2e0" stroke-width="0.4">C2</text>
<path d="M86.3 19.3H99.3L92.8 26Z" fill="#ee8a2b"/>
<path d="M87 27.8H98.6V40.4H95.2L92.8 44.6L90.4 40.4H87Z" fill="#16130f" stroke="#ee8a2b" stroke-width="1.5"/>
<text x="92.8" y="37.9" font-size="9.5" fill="#ee9a48" font-weight="bold" text-anchor="middle">T</text>
</g>
<g id="menubar">
<text x="24.4" y="12.0" font-size="12.5" fill="#eef2fb" font-weight="bold" textLength="17.0" lengthAdjust="spacingAndGlyphs">File</text>
<text x="101.2" y="12.0" font-size="12.5" fill="#eef2fb" font-weight="bold" textLength="32.0" lengthAdjust="spacingAndGlyphs">Utility</text>
<text x="189.3" y="12.0" font-size="12.5" fill="#eef2fb" font-weight="bold" textLength="24.0" lengthAdjust="spacingAndGlyphs">Help</text>
<path d="M364 3H361.6V13.4H364" fill="none" stroke="#dfe4f2" stroke-width="1.3"/>
<path d="M363 8.3H560" stroke="#c3cbe0" stroke-width="1.6"/>
<path d="M380.4 1H388L384.2 4Z" fill="#ee8a2b"/>
<path d="M380.9 5.4H387.5V12.6L384.2 15.6L380.9 12.6Z" fill="#3a2a18" stroke="#ee8a2b" stroke-width="1.3"/>
<text x="384.2" y="11.6" font-size="6.5" fill="#f0c9a0" font-weight="bold" text-anchor="middle">T</text>
</g>
<g id="bottombar">
<rect x="0.00" y="543.00" width="1078.00" height="63.00" fill="#32384b"/>
<rect x="3.2" y="545.5" width="74.8" height="57.8" rx="4.5" fill="#a0b2d6"/>
<path d="M3.2 559.9V550.0Q3.2 545.5 7.7 545.5H73.5Q78.0 545.5 78.0 550.0V559.9Z" fill="#cbb933"/>
<text x="7.8" y="556.6" font-size="11" fill="#1d1c08" textLength="20.4" lengthAdjust="spacingAndGlyphs" stroke="#1d1c08" stroke-width="0.2">Ch 1</text>
<text x="9.9" y="571.4" font-size="10.7" fill="#141c30" textLength="54.2" lengthAdjust="spacing" stroke="#141c30" stroke-width="0.25">2.00 V/div</text>
<text x="9.9" y="584.7" font-size="10.7" fill="#141c30" textLength="24.5" lengthAdjust="spacingAndGlyphs" stroke="#141c30" stroke-width="0.25">1 MΩ</text>
<text x="9.9" y="598.0" font-size="10.7" fill="#141c30" textLength="44.6" lengthAdjust="spacing" stroke="#141c30" stroke-width="0.25">250 MHz</text>
<text x="59.6" y="595.2" font-size="5.6" fill="#141c30" font-weight="bold">B</text>
<text x="63.3" y="598.2" font-size="6" fill="#141c30" font-weight="bold">w</text>
<rect x="82.8" y="545.5" width="74.8" height="57.8" rx="4.5" fill="#a0b2d6" stroke="#5d6a86" stroke-width="1"/>
<path d="M82.8 559.9V550.0Q82.8 545.5 87.3 545.5H153.1Q157.6 545.5 157.6 550.0V559.9Z" fill="#0d4c5c"/>
<text x="87.4" y="556.6" font-size="11" fill="#2cc6e2" textLength="21.0" lengthAdjust="spacingAndGlyphs" stroke="#2cc6e2" stroke-width="0.2">Ch 2</text>
<text x="89.4" y="571.4" font-size="10.7" fill="#141c30" textLength="54.2" lengthAdjust="spacing" stroke="#141c30" stroke-width="0.25">2.00 V/div</text>
<text x="89.4" y="584.7" font-size="10.7" fill="#141c30" textLength="24.5" lengthAdjust="spacingAndGlyphs" stroke="#141c30" stroke-width="0.25">1 MΩ</text>
<text x="89.4" y="598.0" font-size="10.7" fill="#141c30" textLength="44.6" lengthAdjust="spacing" stroke="#141c30" stroke-width="0.25">500 MHz</text>
<text x="139.2" y="595.2" font-size="5.6" fill="#141c30" font-weight="bold">B</text>
<text x="142.9" y="598.2" font-size="6" fill="#141c30" font-weight="bold">w</text>
<rect x="471.0" y="545.4" width="33.4" height="58" rx="5" fill="#31374a" stroke="#505a70" stroke-width="1"/>
<path d="M475.2 552.9H499.6" stroke="#e0628c" stroke-width="2.2"/>
<text x="487.7" y="579.0" font-size="12.5" fill="#eef2fb" font-weight="bold" text-anchor="middle">3</text>
<rect x="508.5" y="545.4" width="33.4" height="58" rx="5" fill="#31374a" stroke="#505a70" stroke-width="1"/>
<path d="M512.7 552.9H537.1" stroke="#8dbb2f" stroke-width="2.2"/>
<text x="525.2" y="579.0" font-size="12.5" fill="#eef2fb" font-weight="bold" text-anchor="middle">4</text>
<rect x="546.0" y="545.4" width="33.4" height="58" rx="5" fill="#31374a" stroke="#505a70" stroke-width="1"/>
<rect x="583.5" y="545.4" width="33.4" height="58" rx="5" fill="#31374a" stroke="#505a70" stroke-width="1"/>
<rect x="621.0" y="545.4" width="33.4" height="58" rx="5" fill="#31374a" stroke="#505a70" stroke-width="1"/>
<rect x="658.5" y="545.4" width="33.4" height="58" rx="5" fill="#31374a" stroke="#505a70" stroke-width="1"/>
<text x="562.7" y="585.6" font-size="12.5" fill="#eef2fb" font-weight="bold" text-anchor="middle" textLength="21.0" lengthAdjust="spacing">-D0</text>
<text x="600.2" y="578.8" font-size="12.5" fill="#eef2fb" font-weight="bold" text-anchor="middle" textLength="18.5" lengthAdjust="spacingAndGlyphs">Ref</text>
<text x="600.2" y="592.2" font-size="12.5" fill="#eef2fb" font-weight="bold" text-anchor="middle" textLength="19.5" lengthAdjust="spacingAndGlyphs">Bus</text>
<text x="637.7" y="578.8" font-size="12.5" fill="#eef2fb" font-weight="bold" text-anchor="middle" textLength="26.0" lengthAdjust="spacingAndGlyphs">DVM</text>
<text x="675.2" y="578.8" font-size="12.5" fill="#eef2fb" font-weight="bold" text-anchor="middle" textLength="23.5" lengthAdjust="spacingAndGlyphs">AFG</text>
<rect x="698.8" y="545.5" width="80.9" height="57.8" rx="4.5" fill="#a0b2d6"/>
<rect x="786.5" y="545.5" width="80.9" height="57.8" rx="4.5" fill="#a0b2d6"/>
<rect x="874.2" y="545.5" width="80.9" height="57.8" rx="4.5" fill="#a0b2d6"/>
<text x="705.5" y="585.0" font-size="10.7" fill="#141c30" textLength="66.0" lengthAdjust="spacingAndGlyphs" stroke="#141c30" stroke-width="0.25">SR: 2.50 GS/s</text>
<text x="705.5" y="598.2" font-size="10.7" fill="#141c30" textLength="61.0" lengthAdjust="spacing" stroke="#141c30" stroke-width="0.25">RL: 100 kpts</text>
<text x="881.0" y="585.0" font-size="10.7" fill="#141c30" textLength="62.6" lengthAdjust="spacing" stroke="#141c30" stroke-width="0.25">5.738 kAcqs</text>
<text x="703.4" y="556.6" font-size="11" fill="#141c30" textLength="56.0" lengthAdjust="spacing" stroke="#141c30" stroke-width="0.25">Horizontal</text>
<text x="705.5" y="570.2" font-size="10.7" fill="#141c30" textLength="58.0" lengthAdjust="spacing" stroke="#141c30" stroke-width="0.25">4.00 µs/div</text>
<text x="791.2" y="556.6" font-size="11" fill="#141c30" textLength="39.0" lengthAdjust="spacing" stroke="#141c30" stroke-width="0.25">Trigger</text>
<text x="878.9" y="556.6" font-size="11" fill="#141c30" textLength="60.0" lengthAdjust="spacing" stroke="#141c30" stroke-width="0.25">Acquisition</text>
<text x="881.0" y="570.2" font-size="10.7" fill="#141c30" textLength="72.0" lengthAdjust="spacing" stroke="#141c30" stroke-width="0.25">Sample: 8 bits</text>
<rect x="961.8" y="545.4" width="33.9" height="58.2" rx="5" fill="#31374a" stroke="#545e75" stroke-width="1"/>
<path d="M966.6 552.9H991" stroke="#e27a32" stroke-width="2.2"/>
<text x="978.8" y="579.0" font-size="12.5" fill="#eef2fb" font-weight="bold" text-anchor="middle" textLength="15.0" lengthAdjust="spacingAndGlyphs">RF</text>
<rect x="1002.4" y="546.1" width="72.7" height="26.4" rx="4.5" fill="#3fad1f"/>
<text x="1015.3" y="563.3" font-size="12.5" fill="#c9f3c0" font-weight="bold" textLength="49.5" lengthAdjust="spacingAndGlyphs">Triggered</text>
<rect x="1002.4" y="576.7" width="72.7" height="26" rx="4.5" fill="#a0b2d6"/>
<text x="1010.3" y="586.6" font-size="10.7" fill="#141c30" textLength="59.0" lengthAdjust="spacingAndGlyphs" stroke="#141c30" stroke-width="0.25">13 Dec 2019</text>
<text x="1021.0" y="600.2" font-size="10.7" fill="#141c30" textLength="38.0" lengthAdjust="spacingAndGlyphs" stroke="#141c30" stroke-width="0.25">08:41:12</text>
</g>
<g id="sidebar">
<rect x="960.60" y="0.00" width="118.00" height="543.50" fill="#33394c"/>
<rect x="960.60" y="0.00" width="9.00" height="543.50" fill="#343a4d"/>
<path d="M1078.5 17.3H969.8V542.4H1078.5" fill="none" stroke="#4b556c" stroke-width="1"/>
<text x="986.0" y="14.4" font-size="18.5" fill="#ffffff" font-weight="bold" textLength="76.6" lengthAdjust="spacingAndGlyphs" stroke="#ffffff" stroke-width="0.7">Tektronix</text>
<path d="M1006.2 14.2L1013.4 3.2" stroke="#2fb9dc" stroke-width="2.8" fill="none"/>
<rect x="972.7" y="20.2" width="48.6" height="33.7" rx="5.5" fill="#343c50" stroke="#4f586e" stroke-width="1"/>
<rect x="1027.0" y="20.2" width="48.6" height="33.7" rx="5.5" fill="#343c50" stroke="#4f586e" stroke-width="1"/>
<rect x="972.7" y="59.5" width="48.6" height="33.7" rx="5.5" fill="#343c50" stroke="#4f586e" stroke-width="1"/>
<rect x="1027.0" y="59.5" width="48.6" height="33.7" rx="5.5" fill="#343c50" stroke="#4f586e" stroke-width="1"/>
<text x="997.0" y="41.4" font-size="12.5" fill="#e6ebf7" font-weight="bold" text-anchor="middle" textLength="39.0" lengthAdjust="spacingAndGlyphs">Cursors</text>
<text x="1051.3" y="41.4" font-size="12.5" fill="#e6ebf7" font-weight="bold" text-anchor="middle" textLength="44.0" lengthAdjust="spacingAndGlyphs">Measure</text>
<text x="997.0" y="80.6" font-size="12.5" fill="#e6ebf7" font-weight="bold" text-anchor="middle" textLength="35.0" lengthAdjust="spacingAndGlyphs">Search</text>
<text x="1051.3" y="73.9" font-size="12.5" fill="#e6ebf7" font-weight="bold" text-anchor="middle" textLength="37.0" lengthAdjust="spacingAndGlyphs">Results</text>
<text x="1051.3" y="87.2" font-size="12.5" fill="#e6ebf7" font-weight="bold" text-anchor="middle" textLength="28.0" lengthAdjust="spacingAndGlyphs">Table</text>
<rect x="973.1" y="100.40" width="102.0" height="44.2" rx="5" fill="#a0b2d6" stroke="#5a6683" stroke-width="1"/>
<path d="M973.1 114.60V105.40Q973.1 100.40 978.1 100.40H1070.1Q1075.1 100.40 1075.1 105.40V114.60Z" fill="#44516c"/>
<text x="977.6" y="112.0" font-size="12.5" fill="#f2f5fc" font-weight="bold" textLength="36.5" lengthAdjust="spacingAndGlyphs">Meas 1</text>
<rect x="1049.80" y="102.80" width="19.40" height="10.00" fill="#cbb933"/>
<text x="1059.5" y="111.8" font-size="11.5" fill="#23220c" text-anchor="middle">1</text>
<text x="979.4" y="125.6" font-size="10.7" fill="#141c30" textLength="21.5" lengthAdjust="spacing" stroke="#141c30" stroke-width="0.25">Max</text>
<text x="979.4" y="139.2" font-size="10.7" fill="#141c30" textLength="34.5" lengthAdjust="spacing" stroke="#141c30" stroke-width="0.25">4.88 V</text>
<rect x="973.1" y="149.15" width="102.0" height="44.2" rx="5" fill="#a0b2d6" stroke="#5a6683" stroke-width="1"/>
<path d="M973.1 163.35V154.15Q973.1 149.15 978.1 149.15H1070.1Q1075.1 149.15 1075.1 154.15V163.35Z" fill="#44516c"/>
<text x="977.6" y="160.8" font-size="12.5" fill="#f2f5fc" font-weight="bold" textLength="36.5" lengthAdjust="spacingAndGlyphs">Meas 2</text>
<rect x="1049.80" y="151.55" width="19.40" height="10.00" fill="#cbb933"/>
<text x="1059.5" y="160.6" font-size="11.5" fill="#23220c" text-anchor="middle">1</text>
<text x="979.4" y="174.3" font-size="10.7" fill="#141c30" textLength="23.5" lengthAdjust="spacing" stroke="#141c30" stroke-width="0.25">High</text>
<text x="979.4" y="187.9" font-size="10.7" fill="#141c30" textLength="34.5" lengthAdjust="spacing" stroke="#141c30" stroke-width="0.25">4.64 V</text>
<rect x="973.1" y="197.90" width="102.0" height="44.2" rx="5" fill="#a0b2d6" stroke="#5a6683" stroke-width="1"/>
<path d="M973.1 212.10V202.90Q973.1 197.90 978.1 197.90H1070.1Q1075.1 197.90 1075.1 202.90V212.10Z" fill="#44516c"/>
<text x="977.6" y="209.5" font-size="12.5" fill="#f2f5fc" font-weight="bold" textLength="36.5" lengthAdjust="spacingAndGlyphs">Meas 3</text>
<rect x="1049.80" y="200.30" width="19.40" height="10.00" fill="#1fc2de"/>
<text x="1059.5" y="209.3" font-size="11.5" fill="#062730" text-anchor="middle">2</text>
<text x="979.4" y="223.1" font-size="10.7" fill="#141c30" textLength="21.5" lengthAdjust="spacing" stroke="#141c30" stroke-width="0.25">Max</text>
<text x="979.4" y="236.7" font-size="10.7" fill="#141c30" textLength="34.5" lengthAdjust="spacing" stroke="#141c30" stroke-width="0.25">4.32 V</text>
<rect x="973.1" y="246.65" width="102.0" height="44.2" rx="5" fill="#a0b2d6" stroke="#5a6683" stroke-width="1"/>
<path d="M973.1 260.85V251.65Q973.1 246.65 978.1 246.65H1070.1Q1075.1 246.65 1075.1 251.65V260.85Z" fill="#44516c"/>
<text x="977.6" y="258.2" font-size="12.5" fill="#f2f5fc" font-weight="bold" textLength="36.5" lengthAdjust="spacingAndGlyphs">Meas 4</text>
<rect x="1049.80" y="249.05" width="19.40" height="10.00" fill="#1fc2de"/>
<text x="1059.5" y="258.1" font-size="11.5" fill="#062730" text-anchor="middle">2</text>
<text x="979.4" y="271.9" font-size="10.7" fill="#141c30" textLength="23.5" lengthAdjust="spacing" stroke="#141c30" stroke-width="0.25">High</text>
<text x="979.4" y="285.4" font-size="10.7" fill="#141c30" textLength="34.5" lengthAdjust="spacing" stroke="#141c30" stroke-width="0.25">4.16 V</text>
</g>
<g id="add-measurements">
<rect x="548.00" y="0.00" width="412.60" height="571.40" fill="#6b7a9e"/>
<rect x="548.00" y="0.00" width="412.60" height="32.80" fill="#43506b"/>
<rect x="548.00" y="569.90" width="412.60" height="1.60" fill="#56627f"/>
<text x="554.5" y="20.9" font-size="12" fill="#e9eefa" textLength="115.6" lengthAdjust="spacingAndGlyphs" word-spacing="2.5"  stroke="#e9eefa" stroke-width="0.45">ADD MEASUREMENTS</text>
<circle cx="941.3" cy="16" r="9.6" fill="none" stroke="#aab6d2" stroke-width="1.5"/>
<text x="941.3" y="23.2" font-size="19.5" fill="#a9b6d3" font-weight="bold" text-anchor="middle" textLength="8.2" lengthAdjust="spacingAndGlyphs">?</text>
<rect x="553.5" y="39.3" width="401.2" height="151.3" fill="#6c7ba0" stroke="#55627f" stroke-width="1"/>
<path d="M588.9 55H734.4M585.4 165.9H734.4" stroke="#a9b5cf" stroke-width="1.1" fill="none"/>
<path d="M732.5 59V111.5M732.5 124.5V161" stroke="#10131c" stroke-width="1" fill="none"/>
<path d="M732.5 54.6L735.4 60.6H729.6ZM732.5 166.2L735.4 160.2H729.6Z" fill="#10131c"/>
<text x="732.3" y="120.0" font-size="12" fill="#10131c" text-anchor="middle">a</text>
<path d="M587.7 152.0C588.3 152.2 590.3 152.1 591.2 152.9C592.1 153.7 592.5 154.9 593.3 157.0C594.1 159.1 595.1 165.2 595.8 165.4C596.5 165.6 596.7 165.4 597.3 158.0C597.9 150.6 598.4 133.8 599.2 120.8C600.0 107.8 601.4 90.4 602.2 80.0C603.1 69.6 603.7 62.7 604.3 58.5C604.9 54.3 605.3 55.0 605.7 55.0C606.1 55.0 606.5 55.2 606.9 58.5C607.3 61.8 607.5 68.8 608.0 74.6C608.5 80.3 609.3 89.2 609.7 93.0C610.1 96.8 610.2 97.1 610.5 97.3C610.8 97.5 611.0 95.9 611.3 94.0C611.6 92.1 612.0 88.6 612.3 86.0C612.6 83.4 613.0 80.1 613.3 78.5C613.6 76.9 613.8 76.5 614.0 76.5C614.2 76.5 614.4 77.2 614.7 78.2C615.0 79.2 615.3 81.4 615.6 82.7C615.9 84.0 616.4 85.2 616.7 85.8C617.0 86.4 617.1 86.4 617.5 86.2C617.9 86.0 618.4 85.1 618.9 84.6C619.4 84.1 619.9 83.4 620.7 83.0C621.5 82.6 620.4 82.4 623.7 82.3C627.1 82.2 637.6 82.1 640.8 82.3C644.0 82.5 642.2 82.5 642.9 83.3C643.6 84.1 644.4 85.0 645.0 87.3C645.6 89.6 645.9 91.4 646.5 97.0C647.1 102.6 647.8 113.6 648.4 120.8C649.0 128.0 649.8 135.6 650.3 140.0C650.8 144.4 651.1 145.7 651.5 147.5C651.9 149.3 652.4 150.1 652.9 150.8C653.4 151.6 654.1 151.8 654.7 152.0C655.3 152.2 655.5 151.8 656.3 152.0C657.2 152.2 658.9 152.1 659.8 152.9C660.7 153.7 661.1 154.9 661.9 157.0C662.7 159.1 663.7 165.2 664.4 165.4C665.1 165.6 665.3 165.4 665.9 158.0C666.5 150.6 667.0 133.8 667.8 120.8C668.6 107.8 670.0 90.4 670.8 80.0C671.7 69.6 672.3 62.7 672.9 58.5C673.5 54.3 673.9 55.0 674.3 55.0C674.7 55.0 675.1 55.2 675.5 58.5C675.9 61.8 676.1 68.8 676.6 74.6C677.1 80.3 677.9 89.2 678.3 93.0C678.7 96.8 678.8 97.1 679.1 97.3C679.4 97.5 679.6 95.9 679.9 94.0C680.2 92.1 680.6 88.6 680.9 86.0C681.2 83.4 681.6 80.1 681.9 78.5C682.2 76.9 682.4 76.5 682.6 76.5C682.8 76.5 683.0 77.2 683.3 78.2C683.6 79.2 683.9 81.4 684.2 82.7C684.5 84.0 685.0 85.2 685.3 85.8C685.6 86.4 685.7 86.4 686.1 86.2C686.5 86.0 687.0 85.1 687.5 84.6C688.0 84.1 688.5 83.4 689.3 83.0C690.1 82.6 689.0 82.4 692.3 82.3C695.7 82.2 706.2 82.1 709.4 82.3C712.6 82.5 710.8 82.5 711.5 83.3C712.2 84.1 713.0 85.0 713.6 87.3C714.2 89.6 714.5 91.4 715.1 97.0C715.7 102.6 716.4 113.6 717.0 120.8C717.6 128.0 718.4 135.6 718.9 140.0C719.4 144.4 719.7 145.7 720.1 147.5C720.5 149.3 721.0 150.1 721.5 150.8C722.0 151.6 722.3 151.8 723.3 152.0C724.3 152.2 726.7 152.2 727.4 152.3" fill="none" stroke="#45431a" stroke-width="3" stroke-linejoin="round" stroke-linecap="round"/>
<path d="M587.7 152.0C588.3 152.2 590.3 152.1 591.2 152.9C592.1 153.7 592.5 154.9 593.3 157.0C594.1 159.1 595.1 165.2 595.8 165.4C596.5 165.6 596.7 165.4 597.3 158.0C597.9 150.6 598.4 133.8 599.2 120.8C600.0 107.8 601.4 90.4 602.2 80.0C603.1 69.6 603.7 62.7 604.3 58.5C604.9 54.3 605.3 55.0 605.7 55.0C606.1 55.0 606.5 55.2 606.9 58.5C607.3 61.8 607.5 68.8 608.0 74.6C608.5 80.3 609.3 89.2 609.7 93.0C610.1 96.8 610.2 97.1 610.5 97.3C610.8 97.5 611.0 95.9 611.3 94.0C611.6 92.1 612.0 88.6 612.3 86.0C612.6 83.4 613.0 80.1 613.3 78.5C613.6 76.9 613.8 76.5 614.0 76.5C614.2 76.5 614.4 77.2 614.7 78.2C615.0 79.2 615.3 81.4 615.6 82.7C615.9 84.0 616.4 85.2 616.7 85.8C617.0 86.4 617.1 86.4 617.5 86.2C617.9 86.0 618.4 85.1 618.9 84.6C619.4 84.1 619.9 83.4 620.7 83.0C621.5 82.6 620.4 82.4 623.7 82.3C627.1 82.2 637.6 82.1 640.8 82.3C644.0 82.5 642.2 82.5 642.9 83.3C643.6 84.1 644.4 85.0 645.0 87.3C645.6 89.6 645.9 91.4 646.5 97.0C647.1 102.6 647.8 113.6 648.4 120.8C649.0 128.0 649.8 135.6 650.3 140.0C650.8 144.4 651.1 145.7 651.5 147.5C651.9 149.3 652.4 150.1 652.9 150.8C653.4 151.6 654.1 151.8 654.7 152.0C655.3 152.2 655.5 151.8 656.3 152.0C657.2 152.2 658.9 152.1 659.8 152.9C660.7 153.7 661.1 154.9 661.9 157.0C662.7 159.1 663.7 165.2 664.4 165.4C665.1 165.6 665.3 165.4 665.9 158.0C666.5 150.6 667.0 133.8 667.8 120.8C668.6 107.8 670.0 90.4 670.8 80.0C671.7 69.6 672.3 62.7 672.9 58.5C673.5 54.3 673.9 55.0 674.3 55.0C674.7 55.0 675.1 55.2 675.5 58.5C675.9 61.8 676.1 68.8 676.6 74.6C677.1 80.3 677.9 89.2 678.3 93.0C678.7 96.8 678.8 97.1 679.1 97.3C679.4 97.5 679.6 95.9 679.9 94.0C680.2 92.1 680.6 88.6 680.9 86.0C681.2 83.4 681.6 80.1 681.9 78.5C682.2 76.9 682.4 76.5 682.6 76.5C682.8 76.5 683.0 77.2 683.3 78.2C683.6 79.2 683.9 81.4 684.2 82.7C684.5 84.0 685.0 85.2 685.3 85.8C685.6 86.4 685.7 86.4 686.1 86.2C686.5 86.0 687.0 85.1 687.5 84.6C688.0 84.1 688.5 83.4 689.3 83.0C690.1 82.6 689.0 82.4 692.3 82.3C695.7 82.2 706.2 82.1 709.4 82.3C712.6 82.5 710.8 82.5 711.5 83.3C712.2 84.1 713.0 85.0 713.6 87.3C714.2 89.6 714.5 91.4 715.1 97.0C715.7 102.6 716.4 113.6 717.0 120.8C717.6 128.0 718.4 135.6 718.9 140.0C719.4 144.4 719.7 145.7 720.1 147.5C720.5 149.3 721.0 150.1 721.5 150.8C722.0 151.6 722.3 151.8 723.3 152.0C724.3 152.2 726.7 152.2 727.4 152.3" fill="none" stroke="#f1e13c" stroke-width="1.8" stroke-linejoin="round" stroke-linecap="round"/>
<text x="754.8" y="55.0" font-size="10.7" fill="#141c30" textLength="68.8" lengthAdjust="spacing" stroke="#141c30" stroke-width="0.25">Peak-to-peak</text>
<text x="754.8" y="81.1" font-size="10.7" fill="#141c30" textLength="159.6" lengthAdjust="spacing" stroke="#141c30" stroke-width="0.25">Peak-to-peak is the difference</text>
<text x="754.8" y="94.9" font-size="10.7" fill="#141c30" textLength="190.6" lengthAdjust="spacing" stroke="#141c30" stroke-width="0.25">between the Max value and the Min</text>
<text x="754.8" y="108.6" font-size="10.7" fill="#141c30" textLength="29.0" lengthAdjust="spacing" stroke="#141c30" stroke-width="0.25">value.</text>
<text x="560.4" y="207.0" font-size="10.7" fill="#141c30" textLength="34.2" lengthAdjust="spacing" stroke="#141c30" stroke-width="0.25">Source</text>
<rect x="560.80" y="211.40" width="92.70" height="27.00" fill="#adc0e1"/>
<text x="563.8" y="229.6" font-size="10.7" fill="#141c30" textLength="22.5" lengthAdjust="spacingAndGlyphs" stroke="#141c30" stroke-width="0.25">Ch 2</text>
<path d="M634.4 224H642L638.2 230.4Z" fill="#5d6d92"/>
<rect x="905" y="206.3" width="46.9" height="27.6" rx="4.5" fill="#8fa9cd"/>
<text x="928.4" y="224.0" font-size="10.7" fill="#141c30" text-anchor="middle" textLength="21.0" lengthAdjust="spacing" stroke="#141c30" stroke-width="0.25">Add</text>
<rect x="549.00" y="263.40" width="409.80" height="31.90" fill="#9cafd3"/>
<text x="554.9" y="283.6" font-size="12" fill="#141c30" textLength="150.0" lengthAdjust="spacingAndGlyphs" stroke="#141c30" stroke-width="0.25">AMPLITUDE MEASUREMENTS</text>
</g>
<g id="amp-grid">
<rect x="556.4" y="306.7" width="37.2" height="24.0" rx="4.5" fill="#a4b7db"/>
<rect x="562.4" y="310.1" width="25.0" height="1.4" fill="#f4f7ff" opacity="0.5"/>
<rect x="562.4" y="325.3" width="25.0" height="1.4" fill="#f4f7ff" opacity="0.5"/>
<path d="M564.8 323.2H566.8L568.0 311.3L569.4 310.1L571.0 313.9H579.6L581.6 325.9L583.4 322.9L586.2 321.9" fill="none" stroke="#171d3c" stroke-width="1.3" stroke-linejoin="round" stroke-linecap="round"/>
<text x="599.2" y="322.3" font-size="10.7" fill="#141c30" textLength="68.0" lengthAdjust="spacing" stroke="#141c30" stroke-width="0.25">Peak-to-peak</text>
<rect x="689.8" y="306.7" width="37.2" height="24.0" rx="4.5" fill="#a4b7db"/>
<rect x="695.8" y="313.1" width="25.0" height="1.4" fill="#f4f7ff" opacity="0.5"/>
<path d="M698.2 323.2H700.2L701.4 311.3L702.8 310.1L704.4 313.9H713.0L715.0 325.9L716.8 322.9L719.6 321.9" fill="none" stroke="#171d3c" stroke-width="1.3" stroke-linejoin="round" stroke-linecap="round"/>
<text x="732.4" y="322.3" font-size="10.7" fill="#141c30" textLength="22.4" lengthAdjust="spacing" stroke="#141c30" stroke-width="0.25">High</text>
<rect x="823.4" y="306.7" width="37.2" height="24.0" rx="4.5" fill="#a4b7db"/>
<rect x="830.4" y="321.3" width="24.0" height="1.3" fill="#f4f7ff" opacity="0.5"/>
<path d="M831.8 323.2H833.8L835.0 311.3L836.4 310.1L838.0 313.9H846.6L848.6 325.9L850.4 322.9L853.2 321.9" fill="none" stroke="#171d3c" stroke-width="1.3" stroke-linejoin="round" stroke-linecap="round"/>
<text x="866.4" y="322.3" font-size="10.7" fill="#141c30" textLength="21.5" lengthAdjust="spacing" stroke="#141c30" stroke-width="0.25">Low</text>
<rect x="556.4" y="338.3" width="37.2" height="24.0" rx="4.5" fill="#a4b7db"/>
<rect x="562.4" y="344.7" width="25.0" height="1.6" fill="#f4f7ff" opacity="0.85"/>
<rect x="562.4" y="353.9" width="25.0" height="1.6" fill="#f4f7ff" opacity="0.85"/>
<path d="M564.8 354.8H566.8L568.0 342.9L569.4 341.7L571.0 345.5H579.6L581.6 357.5L583.4 354.5L586.2 353.5" fill="none" stroke="#171d3c" stroke-width="1.3" stroke-linejoin="round" stroke-linecap="round"/>
<text x="599.2" y="353.9" font-size="10.7" fill="#141c30" textLength="53.0" lengthAdjust="spacing" stroke="#141c30" stroke-width="0.25">Amplitude</text>
<rect x="689.8" y="338.3" width="37.2" height="24.0" rx="4.5" fill="#a4b7db"/>
<rect x="695.8" y="341.1" width="25.0" height="1.6" fill="#f4f7ff" opacity="0.85"/>
<path d="M698.2 354.8H700.2L701.4 342.9L702.8 341.7L704.4 345.5H713.0L715.0 357.5L716.8 354.5L719.6 353.5" fill="none" stroke="#171d3c" stroke-width="1.3" stroke-linejoin="round" stroke-linecap="round"/>
<circle cx="702.8" cy="341.9" r="1.6" fill="#171d3c"/>
<text x="732.4" y="353.9" font-size="10.7" fill="#141c30" textLength="21.5" lengthAdjust="spacing" stroke="#141c30" stroke-width="0.25">Max</text>
<rect x="823.4" y="338.3" width="37.2" height="24.0" rx="4.5" fill="#a4b7db"/>
<rect x="830.4" y="356.9" width="24.0" height="1.3" fill="#f4f7ff" opacity="0.5"/>
<path d="M831.8 354.8H833.8L835.0 342.9L836.4 341.7L838.0 345.5H846.6L848.6 357.5L850.4 354.5L853.2 353.5" fill="none" stroke="#171d3c" stroke-width="1.3" stroke-linejoin="round" stroke-linecap="round"/>
<circle cx="848.6" cy="357.5" r="1.7" fill="#171d3c"/>
<text x="866.4" y="353.9" font-size="10.7" fill="#141c30" textLength="19.0" lengthAdjust="spacing" stroke="#141c30" stroke-width="0.25">Min</text>
<rect x="556.4" y="369.8" width="37.2" height="24.0" rx="4.5" fill="#a4b7db"/>
<rect x="571.4" y="373.0" width="16.5" height="5.2" fill="#f4f7ff" opacity="0.85"/>
<path d="M566.0 390.8C567.9 378.8 569.4 372.4 572.6 372.6C575.8 372.8 576.0 384.2 578.8 384.2C580.8 384.2 580.6 379.2 582.8 379.2H587.0" fill="none" stroke="#171d3c" stroke-width="1.4" stroke-linejoin="round" stroke-linecap="round"/>
<text x="599.2" y="378.3" font-size="10.7" fill="#141c30" textLength="40.5" lengthAdjust="spacing" stroke="#141c30" stroke-width="0.25">Positive</text>
<text x="599.2" y="391.6" font-size="10.7" fill="#141c30" textLength="53.8" lengthAdjust="spacing" stroke="#141c30" stroke-width="0.25">Overshoot</text>
<rect x="689.8" y="369.8" width="37.2" height="24.0" rx="4.5" fill="#a4b7db"/>
<rect x="699.8" y="385.2" width="20.5" height="5.2" fill="#f4f7ff" opacity="0.85"/>
<path d="M699.6 372.6C700.8 383.8 702.4 391.0 705.8 391.0C709.4 391.0 709.6 379.2 712.4 379.2C714.4 379.2 714.0 384.4 716.2 384.4H720.6" fill="none" stroke="#171d3c" stroke-width="1.4" stroke-linejoin="round" stroke-linecap="round"/>
<text x="732.4" y="378.3" font-size="10.7" fill="#141c30" textLength="46.0" lengthAdjust="spacing" stroke="#141c30" stroke-width="0.25">Negative</text>
<text x="732.4" y="391.6" font-size="10.7" fill="#141c30" textLength="53.8" lengthAdjust="spacing" stroke="#141c30" stroke-width="0.25">Overshoot</text>
<rect x="823.4" y="369.8" width="37.2" height="24.0" rx="4.5" fill="#a4b7db"/>
<rect x="838.4" y="372.4" width="16.0" height="4.6" fill="#f4f7ff" opacity="0.85"/>
<rect x="831.4" y="386.2" width="23.0" height="4.4" fill="#f4f7ff" opacity="0.85"/>
<path d="M831.4 385.0H834.4L835.6 389.8L837.0 372.4L838.8 379.4L840.2 375.4L841.6 377.8H845.8L847.0 374.2L848.8 390.8L850.2 382.4L851.6 386.4L854.0 385.2" fill="none" stroke="#171d3c" stroke-width="1.4" stroke-linejoin="round" stroke-linecap="round"/>
<text x="866.4" y="385.4" font-size="10.7" fill="#141c30" textLength="85.4" lengthAdjust="spacing" stroke="#141c30" stroke-width="0.25">Total Overshoot</text>
<rect x="556.4" y="401.3" width="37.2" height="24.0" rx="4.5" fill="#a4b7db"/>
<rect x="563.9" y="411.7" width="23.5" height="2.2" fill="#f4f7ff" opacity="0.85"/>
<path d="M564.0 418.2L564.7 419.2L565.5 419.3L566.2 418.6L567.0 417.0L567.7 414.8L568.4 412.4L569.2 410.1L569.9 408.1L570.7 406.9L571.4 406.4L572.1 406.9L572.9 408.1L573.6 410.1L574.4 412.4L575.1 414.8L575.8 417.0L576.6 418.6L577.3 419.3L578.1 419.2L578.8 418.2L579.5 416.5L580.3 414.3L581.0 411.9L581.8 409.6L582.5 407.8L583.2 406.7L584.0 406.4L584.7 407.1L585.5 408.6L586.2 410.6" fill="none" stroke="#171d3c" stroke-width="1.5" stroke-linejoin="round" stroke-linecap="butt" stroke-dasharray="2.1 1.1"/>
<text x="599.2" y="416.9" font-size="10.7" fill="#141c30" textLength="30.0" lengthAdjust="spacing" stroke="#141c30" stroke-width="0.25">Mean</text>
<rect x="689.8" y="401.3" width="37.2" height="24.0" rx="4.5" fill="#a4b7db"/>
<rect x="697.3" y="411.7" width="23.5" height="2.2" fill="#f4f7ff" opacity="0.85"/>
<path d="M697.4 418.2L697.7 418.7L698.0 419.1L698.3 419.3L698.6 419.4L698.9 419.3L699.2 419.1L699.5 418.8L699.8 418.3L700.1 417.7L700.4 417.0L700.7 416.2L701.0 415.3L701.3 414.3L701.6 413.4L701.9 412.4L702.1 411.4L702.4 410.5L702.7 409.6L703.0 408.8L703.3 408.1L703.6 407.5L703.9 407.0L704.2 406.7L704.5 406.5L704.8 406.4L705.1 406.5L705.4 406.7L705.7 407.1L706.0 407.6L706.3 408.2" fill="none" stroke="#171d3c" stroke-width="1.5" stroke-linejoin="round" stroke-linecap="round"/>
<path d="M706.3 408.2L706.6 409.0L706.9 409.8L707.2 410.8L707.6 411.8L707.9 412.8L708.2 413.9L708.5 414.9L708.8 415.9L709.1 416.7L709.5 417.5L709.8 418.2L710.1 418.7L710.4 419.1L710.7 419.3L711.0 419.4L711.4 419.3L711.7 419.0L712.0 418.6L712.3 418.0L712.6 417.3L712.9 416.5L713.3 415.6L713.6 414.6L713.9 413.6L714.2 412.5L714.5 411.5L714.8 410.5L715.2 409.6L715.5 408.7L715.8 408.0" fill="none" stroke="#171d3c" stroke-width="1.5" stroke-linejoin="round" stroke-linecap="butt" stroke-dasharray="2.1 1.1"/>
<path d="M715.8 408.0L715.9 407.7L716.1 407.5L716.2 407.2L716.3 407.1L716.4 406.9L716.6 406.7L716.7 406.6L716.8 406.5L716.9 406.5L717.1 406.4L717.2 406.4L717.3 406.4L717.4 406.5L717.6 406.5L717.7 406.6L717.8 406.7L718.0 406.9L718.1 407.0L718.2 407.2L718.3 407.4L718.5 407.7L718.6 407.9L718.7 408.2L718.8 408.5L719.0 408.8L719.1 409.2L719.2 409.5L719.3 409.9L719.5 410.3L719.6 410.6" fill="none" stroke="#171d3c" stroke-width="1.5" stroke-linejoin="round" stroke-linecap="round"/>
<text x="732.4" y="416.9" font-size="10.7" fill="#141c30" textLength="59.5" lengthAdjust="spacing" stroke="#141c30" stroke-width="0.25">Cycle Mean</text>
<rect x="823.4" y="401.3" width="37.2" height="24.0" rx="4.5" fill="#a4b7db"/>
<rect x="830.9" y="408.1" width="23.5" height="1.8" fill="#f4f7ff" opacity="0.85"/>
<rect x="830.9" y="410.9" width="23.5" height="1.8" fill="#f4f7ff" opacity="0.85"/>
<path d="M831.0 418.2L831.7 419.2L832.5 419.3L833.2 418.6L834.0 417.0L834.7 414.8L835.4 412.4L836.2 410.1L836.9 408.1L837.7 406.9L838.4 406.4L839.1 406.9L839.9 408.1L840.6 410.1L841.4 412.4L842.1 414.8L842.8 417.0L843.6 418.6L844.3 419.3L845.1 419.2L845.8 418.2L846.5 416.5L847.3 414.3L848.0 411.9L848.8 409.6L849.5 407.8L850.2 406.7L851.0 406.4L851.7 407.1L852.5 408.6L853.2 410.6" fill="none" stroke="#171d3c" stroke-width="1.5" stroke-linejoin="round" stroke-linecap="butt" stroke-dasharray="2.1 1.1"/>
<text x="866.4" y="416.9" font-size="10.7" fill="#141c30" textLength="23.5" lengthAdjust="spacingAndGlyphs" stroke="#141c30" stroke-width="0.25">RMS</text>
<rect x="556.4" y="432.8" width="37.2" height="24.0" rx="4.5" fill="#a4b7db"/>
<rect x="563.9" y="439.6" width="23.5" height="1.8" fill="#f4f7ff" opacity="0.85"/>
<rect x="563.9" y="442.4" width="23.5" height="1.8" fill="#f4f7ff" opacity="0.85"/>
<path d="M564.0 449.7L564.7 450.7L565.5 450.8L566.2 450.1L567.0 448.5L567.7 446.3L568.4 443.9L569.2 441.6L569.9 439.6L570.7 438.4L571.4 437.9L572.1 438.4L572.9 439.6L573.6 441.6L574.4 443.9L575.1 446.3L575.8 448.5L576.6 450.1L577.3 450.8L578.1 450.7L578.8 449.7L579.5 448.0L580.3 445.8L581.0 443.4L581.8 441.1L582.5 439.3L583.2 438.2L584.0 437.9L584.7 438.6L585.5 440.1L586.2 442.1" fill="none" stroke="#171d3c" stroke-width="1.5" stroke-linejoin="round" stroke-linecap="round"/>
<text x="599.2" y="448.4" font-size="10.7" fill="#141c30" textLength="53.0" lengthAdjust="spacingAndGlyphs" stroke="#141c30" stroke-width="0.25">Cycle RMS</text>
</g>
<g id="sections">
<rect x="549.00" y="470.80" width="409.80" height="31.80" fill="#9cafd3"/>
<text x="554.9" y="491.5" font-size="12" fill="#141c30" textLength="116.8" lengthAdjust="spacingAndGlyphs" stroke="#141c30" stroke-width="0.25" word-spacing="2.5">TIME MEASUREMENTS</text>
<path d="M934.3 483.0L939.9 488.4L934.3 493.8" fill="none" stroke="#202a4a" stroke-width="2.4" stroke-linejoin="miter"/>
<rect x="548.00" y="502.60" width="411.40" height="2.20" fill="#596686"/>
<rect x="549.00" y="504.80" width="409.80" height="31.50" fill="#9cafd3"/>
<text x="554.9" y="525.5" font-size="12" fill="#141c30" textLength="127.0" lengthAdjust="spacingAndGlyphs" stroke="#141c30" stroke-width="0.25" word-spacing="2.5">OTHER MEASUREMENTS</text>
<path d="M934.3 517.0L939.9 522.4L934.3 527.8" fill="none" stroke="#202a4a" stroke-width="2.4" stroke-linejoin="miter"/>
<rect x="548.00" y="536.30" width="411.40" height="2.20" fill="#596686"/>
<rect x="549.00" y="538.50" width="409.80" height="31.40" fill="#9cafd3"/>
<text x="554.9" y="559.2" font-size="12" fill="#141c30" textLength="130.0" lengthAdjust="spacingAndGlyphs" stroke="#141c30" stroke-width="0.25" word-spacing="2.5">POWER MEASUREMENTS</text>
<path d="M934.3 550.7L939.9 556.1L934.3 561.5" fill="none" stroke="#202a4a" stroke-width="2.4" stroke-linejoin="miter"/>
</g>
<circle cx="962.5" cy="278.0" r="1.7" fill="#e9edf8"/>
<circle cx="962.5" cy="284.7" r="1.7" fill="#e9edf8"/>
<circle cx="962.5" cy="291.4" r="1.7" fill="#e9edf8"/>
<g id="info-dialog">
<rect x="331.00" y="236.80" width="416.00" height="131.90" fill="#6b7a9e"/>
<rect x="331.00" y="236.80" width="416.00" height="33.80" fill="#43506b"/>
<path d="M331.5 368.7V237.3H747" stroke="#55627f" stroke-width="1" fill="none"/>
<path d="M746.6 237.1V368.3H330.8" stroke="#56627f" stroke-width="1" fill="none"/>
<text x="337.2" y="257.9" font-size="12" fill="#eef2fb" textLength="76.3" lengthAdjust="spacingAndGlyphs" stroke="#eef2fb" stroke-width="0.45">INFORMATION</text>
<text x="722.8" y="257.2" font-size="12" fill="#eef2fb" textLength="7.4" lengthAdjust="spacingAndGlyphs" stroke="#eef2fb" stroke-width="0.3">X</text>
<text x="337.2" y="293.9" font-size="10.7" fill="#141c30" textLength="155.4" lengthAdjust="spacing" stroke="#141c30" stroke-width="0.25">Four measurements maximum</text>
<text x="337.2" y="321.1" font-size="10.7" fill="#141c30" textLength="373.8" lengthAdjust="spacing" stroke="#141c30" stroke-width="0.25">Only four measurements may be displayed at one time. Remove one or</text>
<text x="337.2" y="334.2" font-size="10.7" fill="#141c30" textLength="373.8" lengthAdjust="spacing" stroke="#141c30" stroke-width="0.25">more measurements. Then push X to return to the 'Add Measurement'</text>
<text x="337.2" y="347.2" font-size="10.7" fill="#141c30" textLength="31.0" lengthAdjust="spacing" stroke="#141c30" stroke-width="0.25">menu.</text>
</g>
</g>
</svg></body></html>
